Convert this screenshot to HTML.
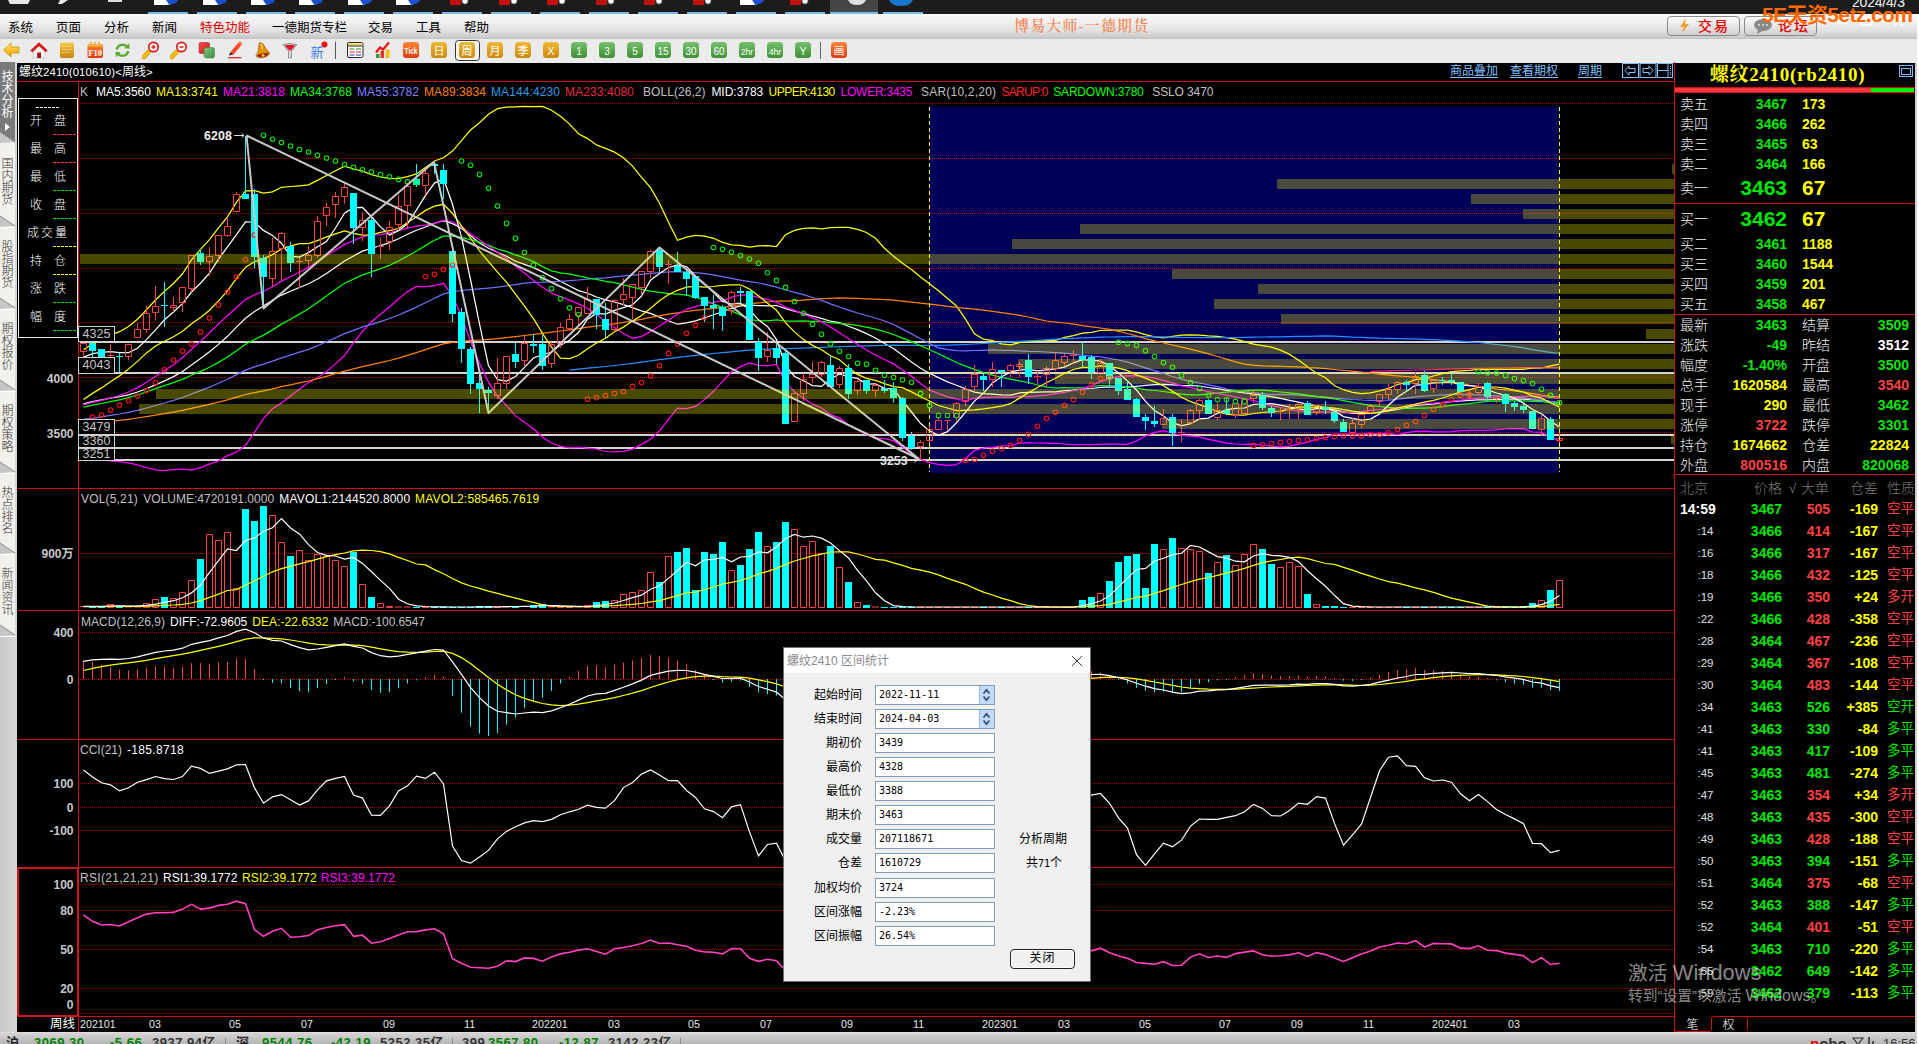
<!DOCTYPE html><html lang="zh"><head><meta charset="utf-8"><title>博易大师-一德期货</title><style>
*{margin:0;padding:0;box-sizing:border-box}
html,body{width:1919px;height:1044px;overflow:hidden;background:#000}
body{position:relative;font-family:"Liberation Sans","Noto Sans CJK SC",sans-serif;font-size:12px;color:#fff;line-height:1}
.a{position:absolute;white-space:nowrap}
#task{left:0;top:0;width:1919px;height:14px;background:#1c1c1c}
#menu{left:0;top:14px;width:1917px;height:25px;background:linear-gradient(#f8f8f8 0,#efefef 35%,#dedede 72%,#c4c4c4 100%)}
#menu span{position:absolute;top:7.5px;color:#000;font-size:12.5px}
#tool{left:0;top:38px;width:1917px;height:25px;background:#ebebeb;border-top:1px solid #c4c4c4}
#side{left:0;top:62px;width:17px;height:970px;background:linear-gradient(90deg,#c8c8c8 0,#d8d8d8 100%)}
#status{left:0;top:1032px;width:1917px;height:12px;background:linear-gradient(#d6d4d4,#b6b6b6);border-top:1px solid #e4dcdc;overflow:hidden}
.t{position:absolute;white-space:nowrap;font-size:12px;line-height:14px}
.ax{position:absolute;white-space:nowrap;font-size:12px;line-height:14px;color:#c8c8c8;font-weight:bold;text-align:right;width:60px}
.rp{position:absolute;white-space:nowrap;line-height:20px;height:20px}
.lab{font-size:14px;color:#f4f4f4;font-family:"Liberation Sans","Noto Sans CJK SC",sans-serif;font-weight:300}
.num{font-size:14px;font-weight:bold;text-align:right}
.g{color:#00e600}.y{color:#ffff00}.r{color:#ff4040}.w{color:#fff}
.dl{position:absolute;text-align:right;width:80px;left:-2px;font-size:12px;color:#000;line-height:14px}
.in{position:absolute;left:91px;width:120px;height:20px;background:#fff;border:1px solid #7f9db9;font-family:"DejaVu Sans Mono","Liberation Mono",monospace;font-size:10px;color:#000;line-height:17px;padding-left:3px}
</style></head><body>
<div id="task" class="a"><svg width="1919" height="14" style="position:absolute;left:0;top:0"><rect x="148" y="12" width="40" height="2" fill="#76b9ed"/><rect x="197" y="12" width="40" height="2" fill="#76b9ed"/><rect x="246" y="12" width="40" height="2" fill="#76b9ed"/><rect x="295" y="12" width="40" height="2" fill="#76b9ed"/><rect x="344" y="12" width="40" height="2" fill="#76b9ed"/><rect x="393" y="12" width="40" height="2" fill="#76b9ed"/><rect x="442" y="12" width="40" height="2" fill="#76b9ed"/><rect x="491" y="12" width="40" height="2" fill="#76b9ed"/><rect x="540" y="12" width="40" height="2" fill="#76b9ed"/><rect x="589" y="12" width="40" height="2" fill="#76b9ed"/><rect x="638" y="12" width="40" height="2" fill="#76b9ed"/><rect x="687" y="12" width="40" height="2" fill="#76b9ed"/><rect x="736" y="12" width="40" height="2" fill="#76b9ed"/><rect x="785" y="12" width="40" height="2" fill="#76b9ed"/><rect x="883" y="12" width="40" height="2" fill="#76b9ed"/><rect x="830" y="0" width="48" height="14" fill="#454545"/><rect x="830" y="12" width="48" height="2" fill="#76b9ed"/><path d="M154,0 h20 v2 q-2,3 -8,3 h-12 z" fill="#fff"/><path d="M166,0 h12 q-1,4 -9,4.5 z" fill="#1b4fd0"/><path d="M203,0 h20 v2 q-2,3 -8,3 h-12 z" fill="#fff"/><path d="M215,0 h12 q-1,4 -9,4.5 z" fill="#1b4fd0"/><path d="M251,0 h20 v2 q-2,3 -8,3 h-12 z" fill="#fff"/><path d="M263,0 h12 q-1,4 -9,4.5 z" fill="#1b4fd0"/><path d="M299,0 h20 v2 q-2,3 -8,3 h-12 z" fill="#fff"/><path d="M311,0 h12 q-1,4 -9,4.5 z" fill="#1b4fd0"/><path d="M348,0 h20 v2 q-2,3 -8,3 h-12 z" fill="#fff"/><path d="M360,0 h12 q-1,4 -9,4.5 z" fill="#1b4fd0"/><path d="M396,0 h20 v2 q-2,3 -8,3 h-12 z" fill="#fff"/><path d="M408,0 h12 q-1,4 -9,4.5 z" fill="#1b4fd0"/><path d="M740,0 h20 v2 q-2,3 -8,3 h-12 z" fill="#fff"/><path d="M752,0 h12 q-1,4 -9,4.5 z" fill="#1b4fd0"/><rect x="450" y="0" width="11" height="5" fill="#c01010"/><circle cx="465" cy="1" r="3.2" fill="#fff" stroke="#222" stroke-width="0.8"/><rect x="499" y="0" width="11" height="5" fill="#c01010"/><circle cx="514" cy="1" r="3.2" fill="#fff" stroke="#222" stroke-width="0.8"/><rect x="547" y="0" width="11" height="5" fill="#c01010"/><circle cx="562" cy="1" r="3.2" fill="#fff" stroke="#222" stroke-width="0.8"/><rect x="596" y="0" width="11" height="5" fill="#c01010"/><circle cx="611" cy="1" r="3.2" fill="#fff" stroke="#222" stroke-width="0.8"/><rect x="644" y="0" width="11" height="5" fill="#c01010"/><circle cx="659" cy="1" r="3.2" fill="#fff" stroke="#222" stroke-width="0.8"/><rect x="693" y="0" width="11" height="5" fill="#c01010"/><circle cx="708" cy="1" r="3.2" fill="#fff" stroke="#222" stroke-width="0.8"/><rect x="790" y="0" width="11" height="5" fill="#c01010"/><circle cx="805" cy="1" r="3.2" fill="#fff" stroke="#222" stroke-width="0.8"/><path d="M8,0 h22 l-2,4 h-18 z" fill="#e8e8e8"/><path d="M60,0 l8,0 l-6,4 l-4,0 z" fill="#e8e8e8"/><rect x="108" y="0" width="14" height="2" fill="#ddd"/><path d="M848,0 h18 q-2,5 -9,5 q-7,0 -9,-5z" fill="#e0e0e0"/><path d="M889,0 h24 q-3,6 -12,6 q-9,0 -12,-6z" fill="#1878d0"/></svg></div>
<div id="menu" class="a">
<span style="left:8px">系统</span>
<span style="left:56px">页面</span>
<span style="left:104px">分析</span>
<span style="left:152px">新闻</span>
<span style="left:200px;color:#e00000">特色功能</span>
<span style="left:272px">一德期货专栏</span>
<span style="left:368px">交易</span>
<span style="left:416px">工具</span>
<span style="left:464px">帮助</span>
<span style="left:1014px;top:5px;font-family:'Liberation Serif','Noto Serif CJK SC',serif;font-size:15px;font-weight:500;color:#f4804a;letter-spacing:1.15px">博易大师-一德期货</span>
<div class="a" style="left:1667px;top:2px;width:73px;height:20px;border:1px solid #8a8a8a;border-radius:4px;background:linear-gradient(#fdfdfd,#e2e2e2 60%,#cfcfcf)"></div>
<div class="a" style="left:1744px;top:2px;width:73px;height:20px;border:1px solid #8a8a8a;border-radius:4px;background:linear-gradient(#fdfdfd,#e2e2e2 60%,#cfcfcf)"></div>
<svg class="a" style="left:1678px;top:4px" width="14" height="17"><path d="M8,0 L2,9 H6 L3,16 L11,6 H7 Z" fill="#f0a030"/></svg>
<span style="left:1698px;top:5px;color:#e00000;font-size:14px;font-weight:500;letter-spacing:2px">交易</span>
<svg class="a" style="left:1754px;top:5px" width="20" height="15"><ellipse cx="9" cy="6" rx="9" ry="6" fill="#8a8a8a"/><path d="M4,10 L3,15 L10,11z" fill="#8a8a8a"/><circle cx="5" cy="6" r="1.1" fill="#ddd"/><circle cx="9" cy="6" r="1.1" fill="#ddd"/><circle cx="13" cy="6" r="1.1" fill="#ddd"/></svg>
<span style="left:1778px;top:5px;color:#e00000;font-size:14px;font-weight:500;letter-spacing:2px">论坛</span>
<svg class="a" style="left:1830px;top:0px" width="86" height="24"><g stroke="#fff" stroke-width="1.6" fill="none"><path d="M6,9 h12"/><rect x="32" y="3" width="10" height="8"/><path d="M64,3 l9,9 M73,3 l-9,9"/></g></svg>
</div>
<div class="a" style="left:1852px;top:-5px;font-size:14px;color:#f4f4f4;letter-spacing:-0.2px">2024/4/3</div>
<div class="a" style="left:1762px;top:3px;font-size:21px;font-weight:bold;color:#ff6a00;letter-spacing:-0.6px;line-height:24px">5E天资5etz.com</div>
<div id="tool" class="a"><svg width="900" height="23" style="position:absolute;left:0;top:0">
<defs><linearGradient id="gy" x1="0" y1="0" x2="0" y2="1"><stop offset="0" stop-color="#ffe860"/><stop offset="1" stop-color="#f0a000"/></linearGradient><linearGradient id="gn" x1="0" y1="0" x2="0" y2="1"><stop offset="0" stop-color="#f6c848"/><stop offset="1" stop-color="#c88410"/></linearGradient><linearGradient id="gf" x1="0" y1="0" x2="0" y2="1"><stop offset="0" stop-color="#ff8838"/><stop offset="1" stop-color="#e03810"/></linearGradient><linearGradient id="gr" x1="0" y1="0" x2="1" y2="1"><stop offset="0" stop-color="#ff5050"/><stop offset="1" stop-color="#c81010"/></linearGradient><linearGradient id="gg" x1="0" y1="0" x2="1" y2="1"><stop offset="0" stop-color="#80c880"/><stop offset="1" stop-color="#3c8c3c"/></linearGradient><linearGradient id="go" x1="0" y1="0" x2="0" y2="1"><stop offset="0" stop-color="#f0b838"/><stop offset="1" stop-color="#cc8808"/></linearGradient><linearGradient id="gq" x1="0" y1="0" x2="0" y2="1"><stop offset="0" stop-color="#78c070"/><stop offset="1" stop-color="#3c9034"/></linearGradient></defs><path d="M3.500,11 L11,4 V8 H19 V14 H11 V18 Z" fill="url(#gy)" stroke="#c88a00" stroke-width="0.7"/><path d="M33,12.500 L39,7 L45,12.500 V19 H33 Z" fill="#f2f2f2" stroke="#aaa" stroke-width="0.5"/><path d="M39,3.300 L47.700,11.500 L45.700,13.200 L39,7 L32.300,13.200 L30.300,11.500 Z" fill="#d81818"/><rect x="37.200" y="13.500" width="3.800" height="5.500" fill="#a81010"/><rect x="60" y="3.500" width="14" height="15.500" rx="2" fill="url(#gn)"/><path d="M62,7.500 h10 M62,10.500 h10 M62,13.500 h8" stroke="#f8e0a0" stroke-width="0.8" stroke-dasharray="1.500,0.700"/><rect x="87.500" y="5" width="15.500" height="14" rx="2" fill="url(#gf)"/><rect x="88" y="5" width="14.500" height="2.500" rx="1" fill="#f8b838"/><path d="M91,3 v3 M95,3 v3 M99,3 v3" stroke="#e89020" stroke-width="1.200"/><text x="95.200" y="16.800" font-size="8.500" font-weight="bold" text-anchor="middle" fill="#fff" font-family="Liberation Serif,serif">F10</text><g fill="none" stroke="#5aaa30" stroke-width="2.400"><path d="M116.800,10.500 A5.800,5.300 0 0 1 126.500,7.200"/><path d="M128.200,12 A5.800,5.300 0 0 1 118.500,15.300"/></g><path d="M124.300,9.300 L129.800,9.800 L128.800,4.300 Z M120.700,13.200 L115.200,12.700 L116.200,18.200 Z" fill="#5aaa30"/><path d="M144.0,18 l4.500,-5" stroke="#c89000" stroke-width="4.400" stroke-linecap="round"/><path d="M144.0,18 l4.500,-5" stroke="#f8c010" stroke-width="3.200" stroke-linecap="round"/><circle cx="153.5" cy="8" r="4.700" fill="#fff" stroke="#e01818" stroke-width="1.700"/><path d="M151.5,8 h4" stroke="#e01818" stroke-width="1.500"/><path d="M153.5,6 v4" stroke="#e01818" stroke-width="1.500"/><path d="M172.0,18 l4.500,-5" stroke="#c89000" stroke-width="4.400" stroke-linecap="round"/><path d="M172.0,18 l4.500,-5" stroke="#f8c010" stroke-width="3.200" stroke-linecap="round"/><circle cx="181.5" cy="8" r="4.700" fill="#fff" stroke="#e01818" stroke-width="1.700"/><path d="M179.5,8 h4" stroke="#e01818" stroke-width="1.500"/><rect x="199" y="3.500" width="10.500" height="11" rx="1.500" fill="url(#gr)" stroke="#a01010" stroke-width="0.500"/><rect x="204" y="8.500" width="10.500" height="10.500" rx="2" fill="url(#gg)" stroke="#3a7a3a" stroke-width="0.500"/><path d="M230.500,13 L238.500,3.500 L241.500,6 L233.500,15.500 Z" fill="#f84828"/><path d="M230.500,13 L233.500,15.500 L228.800,16.500 Z" fill="#303030"/><path d="M238.500,3.500 L239.800,2.300 L242.600,4.700 L241.500,6Z" fill="#ff7050"/><path d="M228,18.700 h13.500" stroke="#f02020" stroke-width="1.300"/><path d="M259.500,3.500 Q263,3.500 265,8 Q267,12 269.500,13.500 Q270,17 263,18.700 Q256.500,19.500 256,16.500 Q258,14 258.500,10 Q258.700,5 259.500,3.500 Z" fill="#e8920c" stroke="#9a4a04" stroke-width="0.600"/><path d="M257,16.300 Q262,13.500 268.500,14 Q268,17 263,18 Q258,18.700 257,16.300Z" fill="#8a2408"/><circle cx="263" cy="16.200" r="1.500" fill="#f8c030"/><path d="M260.500,5 Q262,6 262.500,10" stroke="#ffd870" stroke-width="1.200" fill="none"/><path d="M283,5.500 Q290,3.500 297,5.500 L291.500,12 V19 H288.500 V12 Z" fill="#dcdcdc" stroke="#707070" stroke-width="0.700"/><path d="M284.500,6.300 Q290,5 295.500,6.300 L290.800,11.500 H289.200 Z" fill="#e01830"/><text x="310.500" y="18" font-size="13" fill="#3a7ae8" font-family="Noto Sans CJK SC,sans-serif">新</text><circle cx="324.500" cy="5.600" r="3" fill="#f81010"/><path d="M335.500,2.500 v17.500" stroke="#585858" stroke-width="1"/><rect x="347.500" y="3.500" width="15.500" height="15" rx="1.500" fill="#fff" stroke="#282828" stroke-width="1"/><path d="M348,5.500 h14.500" stroke="#f0d040" stroke-width="2"/><path d="M348,7 h14.500" stroke="#282828" stroke-width="1"/><path d="M349.500,10 h5 M356,10 h5" stroke="#209020" stroke-width="1.200"/><path d="M349.500,13 h5 M356,13 h5" stroke="#e01818" stroke-width="1.200"/><path d="M349.500,16 h5 M356,16 h5" stroke="#1830a0" stroke-width="1.200"/><rect x="376" y="15" width="3.500" height="4" fill="#389838"/><rect x="380.500" y="12" width="3.500" height="7" fill="#e83030"/><rect x="385.500" y="10.500" width="4" height="8.500" fill="#f4c020"/><path d="M376,13.500 L380,8.500 L383,10.500 L389,3.500" stroke="#f01010" stroke-width="2.200" fill="none"/><rect x="403" y="3" width="16" height="16" rx="3" fill="url(#gf)"/><text x="411" y="15" font-size="9.500" font-weight="bold" text-anchor="middle" fill="#fff" font-family="Liberation Sans,sans-serif" textLength="13" lengthAdjust="spacingAndGlyphs">Tick</text><rect x="431" y="3" width="16" height="16" rx="3.500" fill="url(#go)"/><text x="439" y="15.5" font-size="11" text-anchor="middle" fill="#fff" font-family='Liberation Sans,Noto Sans CJK SC,sans-serif'>日</text><rect x="455.5" y="1.500" width="24" height="20" rx="3" fill="#f4f4f4" stroke="#333" stroke-width="1"/><rect x="459" y="3" width="16" height="16" rx="3.500" fill="url(#go)"/><text x="467" y="15.5" font-size="11" text-anchor="middle" fill="#fff" font-family='Liberation Sans,Noto Sans CJK SC,sans-serif'>周</text><rect x="487" y="3" width="16" height="16" rx="3.500" fill="url(#go)"/><text x="495" y="15.5" font-size="11" text-anchor="middle" fill="#fff" font-family='Liberation Sans,Noto Sans CJK SC,sans-serif'>月</text><rect x="515" y="3" width="16" height="16" rx="3.500" fill="url(#go)"/><text x="523" y="15.5" font-size="11" text-anchor="middle" fill="#fff" font-family='Liberation Sans,Noto Sans CJK SC,sans-serif'>季</text><rect x="543" y="3" width="16" height="16" rx="3.500" fill="url(#go)"/><text x="551" y="15.5" font-size="11" text-anchor="middle" fill="#fff" font-family='Liberation Sans,Noto Sans CJK SC,sans-serif'>X</text><rect x="571" y="3" width="16" height="16" rx="3.500" fill="url(#gq)"/><text x="579" y="15.5" font-size="10" text-anchor="middle" fill="#fff" font-family='Liberation Sans,Noto Sans CJK SC,sans-serif'>1</text><rect x="599" y="3" width="16" height="16" rx="3.500" fill="url(#gq)"/><text x="607" y="15.5" font-size="10" text-anchor="middle" fill="#fff" font-family='Liberation Sans,Noto Sans CJK SC,sans-serif'>3</text><rect x="627" y="3" width="16" height="16" rx="3.500" fill="url(#gq)"/><text x="635" y="15.5" font-size="10" text-anchor="middle" fill="#fff" font-family='Liberation Sans,Noto Sans CJK SC,sans-serif'>5</text><rect x="655" y="3" width="16" height="16" rx="3.500" fill="url(#gq)"/><text x="663" y="15.5" font-size="10" text-anchor="middle" fill="#fff" font-family='Liberation Sans,Noto Sans CJK SC,sans-serif'>15</text><rect x="683" y="3" width="16" height="16" rx="3.500" fill="url(#gq)"/><text x="691" y="15.5" font-size="10" text-anchor="middle" fill="#fff" font-family='Liberation Sans,Noto Sans CJK SC,sans-serif'>30</text><rect x="711" y="3" width="16" height="16" rx="3.500" fill="url(#gq)"/><text x="719" y="15.5" font-size="10" text-anchor="middle" fill="#fff" font-family='Liberation Sans,Noto Sans CJK SC,sans-serif'>60</text><rect x="739" y="3" width="16" height="16" rx="3.500" fill="url(#gq)"/><text x="747" y="15.5" font-size="8.6" text-anchor="middle" fill="#fff" font-family='Liberation Sans,Noto Sans CJK SC,sans-serif'>2hr</text><rect x="767" y="3" width="16" height="16" rx="3.500" fill="url(#gq)"/><text x="775" y="15.5" font-size="8.6" text-anchor="middle" fill="#fff" font-family='Liberation Sans,Noto Sans CJK SC,sans-serif'>4hr</text><rect x="795" y="3" width="16" height="16" rx="3.500" fill="url(#gq)"/><text x="803" y="15.5" font-size="10" text-anchor="middle" fill="#fff" font-family='Liberation Sans,Noto Sans CJK SC,sans-serif'>Y</text><path d="M820.5,3 v17" stroke="#666" stroke-width="1"/><rect x="831" y="3" width="16" height="16" rx="3.500" fill="url(#gf)"/><text x="839" y="15.5" font-size="11" text-anchor="middle" fill="#fff" font-family='Liberation Sans,Noto Sans CJK SC,sans-serif'>画</text>
</svg></div>
<div id="side" class="a"><svg width="17" height="970" style="position:absolute;left:0;top:0">
<rect x="0" y="0" width="15" height="573" fill="#f1f0ea"/><path d="M0,0 H15 V80 L0,70 Z" fill="#7a7a7a"/><path d="M0,70 L15,80 L0,81 Z" fill="#c6c6c6"/><path d="M0,70 L15,80" stroke="#8a8a8a" stroke-width="1" fill="none"/><path d="M0,154 L15,164 L0,165 Z" fill="#c6c6c6"/><path d="M0,154 L15,164" stroke="#8a8a8a" stroke-width="1" fill="none"/><path d="M0,165.5 H15" stroke="#fff" stroke-width="1" fill="none"/><path d="M0,236 L15,246 L0,247 Z" fill="#c6c6c6"/><path d="M0,236 L15,246" stroke="#8a8a8a" stroke-width="1" fill="none"/><path d="M0,247.5 H15" stroke="#fff" stroke-width="1" fill="none"/><path d="M0,318 L15,328 L0,329 Z" fill="#c6c6c6"/><path d="M0,318 L15,328" stroke="#8a8a8a" stroke-width="1" fill="none"/><path d="M0,329.5 H15" stroke="#fff" stroke-width="1" fill="none"/><path d="M0,400 L15,410 L0,411 Z" fill="#c6c6c6"/><path d="M0,400 L15,410" stroke="#8a8a8a" stroke-width="1" fill="none"/><path d="M0,411.5 H15" stroke="#fff" stroke-width="1" fill="none"/><path d="M0,481 L15,491 L0,492 Z" fill="#c6c6c6"/><path d="M0,481 L15,491" stroke="#8a8a8a" stroke-width="1" fill="none"/><path d="M0,492.5 H15" stroke="#fff" stroke-width="1" fill="none"/><path d="M0,563 L15,573 L0,574 Z" fill="#c6c6c6"/><path d="M0,563 L15,573" stroke="#8a8a8a" stroke-width="1" fill="none"/><path d="M0,574.5 H15" stroke="#fff" stroke-width="1" fill="none"/><text x="7.500" y="18.9" font-size="12" font-weight="400" text-anchor="middle" fill="#fff" font-family="Noto Sans CJK SC,sans-serif">技</text><text x="7.500" y="30.9" font-size="12" font-weight="400" text-anchor="middle" fill="#fff" font-family="Noto Sans CJK SC,sans-serif">术</text><text x="7.500" y="42.9" font-size="12" font-weight="400" text-anchor="middle" fill="#fff" font-family="Noto Sans CJK SC,sans-serif">分</text><text x="7.500" y="54.9" font-size="12" font-weight="400" text-anchor="middle" fill="#fff" font-family="Noto Sans CJK SC,sans-serif">析</text><path d="M5,61 l5,4 l-5,4z" fill="#fff"/><text x="7.500" y="105.7" font-size="12" font-weight="300" text-anchor="middle" fill="#333" font-family="Noto Sans CJK SC,sans-serif">国</text><text x="7.500" y="117.7" font-size="12" font-weight="300" text-anchor="middle" fill="#333" font-family="Noto Sans CJK SC,sans-serif">内</text><text x="7.500" y="129.7" font-size="12" font-weight="300" text-anchor="middle" fill="#333" font-family="Noto Sans CJK SC,sans-serif">期</text><text x="7.500" y="141.7" font-size="12" font-weight="300" text-anchor="middle" fill="#333" font-family="Noto Sans CJK SC,sans-serif">货</text><text x="7.500" y="188.7" font-size="12" font-weight="300" text-anchor="middle" fill="#333" font-family="Noto Sans CJK SC,sans-serif">股</text><text x="7.500" y="200.7" font-size="12" font-weight="300" text-anchor="middle" fill="#333" font-family="Noto Sans CJK SC,sans-serif">指</text><text x="7.500" y="212.7" font-size="12" font-weight="300" text-anchor="middle" fill="#333" font-family="Noto Sans CJK SC,sans-serif">期</text><text x="7.500" y="224.7" font-size="12" font-weight="300" text-anchor="middle" fill="#333" font-family="Noto Sans CJK SC,sans-serif">货</text><text x="7.500" y="270.7" font-size="12" font-weight="300" text-anchor="middle" fill="#333" font-family="Noto Sans CJK SC,sans-serif">期</text><text x="7.500" y="282.7" font-size="12" font-weight="300" text-anchor="middle" fill="#333" font-family="Noto Sans CJK SC,sans-serif">权</text><text x="7.500" y="294.7" font-size="12" font-weight="300" text-anchor="middle" fill="#333" font-family="Noto Sans CJK SC,sans-serif">报</text><text x="7.500" y="306.7" font-size="12" font-weight="300" text-anchor="middle" fill="#333" font-family="Noto Sans CJK SC,sans-serif">价</text><text x="7.500" y="352.7" font-size="12" font-weight="300" text-anchor="middle" fill="#333" font-family="Noto Sans CJK SC,sans-serif">期</text><text x="7.500" y="364.7" font-size="12" font-weight="300" text-anchor="middle" fill="#333" font-family="Noto Sans CJK SC,sans-serif">权</text><text x="7.500" y="376.7" font-size="12" font-weight="300" text-anchor="middle" fill="#333" font-family="Noto Sans CJK SC,sans-serif">策</text><text x="7.500" y="388.7" font-size="12" font-weight="300" text-anchor="middle" fill="#333" font-family="Noto Sans CJK SC,sans-serif">略</text><text x="7.500" y="434.7" font-size="12" font-weight="300" text-anchor="middle" fill="#333" font-family="Noto Sans CJK SC,sans-serif">热</text><text x="7.500" y="446.7" font-size="12" font-weight="300" text-anchor="middle" fill="#333" font-family="Noto Sans CJK SC,sans-serif">点</text><text x="7.500" y="458.7" font-size="12" font-weight="300" text-anchor="middle" fill="#333" font-family="Noto Sans CJK SC,sans-serif">排</text><text x="7.500" y="470.7" font-size="12" font-weight="300" text-anchor="middle" fill="#333" font-family="Noto Sans CJK SC,sans-serif">名</text><text x="7.500" y="515.7" font-size="12" font-weight="300" text-anchor="middle" fill="#333" font-family="Noto Sans CJK SC,sans-serif">新</text><text x="7.500" y="527.7" font-size="12" font-weight="300" text-anchor="middle" fill="#333" font-family="Noto Sans CJK SC,sans-serif">闻</text><text x="7.500" y="539.7" font-size="12" font-weight="300" text-anchor="middle" fill="#333" font-family="Noto Sans CJK SC,sans-serif">资</text><text x="7.500" y="551.7" font-size="12" font-weight="300" text-anchor="middle" fill="#333" font-family="Noto Sans CJK SC,sans-serif">讯</text>
</svg></div>
<svg class="a" style="left:0;top:0" width="1919" height="1044" shape-rendering="auto">
<rect x="930" y="107" width="629" height="366" fill="#000058"/>
<path d="M80,103.5 H1674 M80,158.5 H1674 M80,213.5 H1674 M80,268.5 H1674 M80,322.5 H1674 M80,377.5 H1674 M80,432.5 H1674 M80,553.5 H1674 M80,632.5 H1674 M80,679.5 H1674 M80,783.5 H1674 M80,807.5 H1674 M80,830.5 H1674 M80,884.5 H1674 M80,910.5 H1674 M80,949.5 H1674 M80,988.5 H1674 M80,1013.5 H1674" stroke="#b80000" stroke-width="1" stroke-dasharray="1,1" fill="none"/>
<rect x="80" y="341" width="1594" height="2" fill="#d4d4d4"/>
<rect x="930" y="341" width="629" height="2" fill="#d8d8a8"/>
<rect x="80" y="372" width="1594" height="2" fill="#d4d4d4"/>
<rect x="930" y="372" width="629" height="2" fill="#d8d8a8"/>
<rect x="80" y="434" width="1594" height="2" fill="#d4d4d4"/>
<rect x="930" y="434" width="629" height="2" fill="#d8d8a8"/>
<rect x="80" y="447" width="1594" height="2" fill="#d4d4d4"/>
<rect x="930" y="447" width="629" height="2" fill="#d8d8a8"/>
<rect x="80" y="459" width="1594" height="2" fill="#d4d4d4"/>
<rect x="930" y="459" width="629" height="2" fill="#d8d8a8"/>
<path d="M83.5,349.8 L92.5,343.9 L101.5,339.4 L110.5,335.2 L119.5,331.7 L128.5,326.6 L137.5,319.3 L146.5,309.8 L155.5,300.0 L164.5,291.3 L173.5,283.5 L182.5,273.8 L191.5,259.8 L200.5,249.4 L209.5,239.6 L218.5,227.8 L227.5,217.0 L236.5,202.1 L245.5,190.9 L254.5,190.6 L263.5,193.2 L272.5,191.9 L281.5,187.3 L290.5,186.5 L299.5,185.8 L308.5,184.9 L317.5,180.4 L326.5,175.5 L335.5,170.8 L344.5,166.2 L353.5,169.0 L362.5,171.0 L371.5,174.7 L380.5,177.0 L389.5,178.3 L398.5,178.5 L407.5,176.7 L416.5,173.9 L425.5,167.4 L434.5,161.0 L443.5,157.8 L452.5,151.1 L461.5,140.7 L470.5,130.0 L479.5,122.7 L488.5,114.3 L497.5,108.6 L506.5,107.1 L515.5,106.8 L524.5,106.5 L533.5,106.6 L542.5,106.5 L551.5,110.2 L560.5,116.2 L569.5,124.1 L578.5,133.7 L587.5,138.6 L596.5,144.9 L605.5,148.4 L614.5,152.1 L623.5,157.8 L632.5,166.1 L641.5,177.4 L650.5,187.6 L659.5,203.2 L668.5,222.3 L677.5,240.3 L686.5,237.2 L695.5,235.4 L704.5,236.2 L713.5,238.3 L722.5,242.3 L731.5,244.9 L740.5,245.3 L749.5,247.2 L758.5,245.9 L767.5,245.6 L776.5,246.5 L785.5,234.7 L794.5,230.4 L803.5,228.4 L812.5,227.8 L821.5,228.8 L830.5,227.6 L839.5,227.3 L848.5,227.4 L857.5,229.4 L866.5,232.5 L875.5,238.3 L884.5,248.2 L893.5,256.2 L902.5,263.2 L911.5,269.5 L920.5,277.1 L929.5,283.8 L938.5,290.8 L947.5,298.4 L956.5,305.9 L965.5,319.2 L974.5,333.9 L983.5,339.2 L992.5,340.7 L1001.5,343.9 L1010.5,344.9 L1019.5,342.6 L1028.5,341.6 L1037.5,341.3 L1046.5,340.7 L1055.5,340.4 L1064.5,337.3 L1073.5,335.7 L1082.5,333.1 L1091.5,332.4 L1100.5,330.5 L1109.5,330.2 L1118.5,330.2 L1127.5,330.2 L1136.5,331.8 L1145.5,334.7 L1154.5,336.8 L1163.5,337.8 L1172.5,336.4 L1181.5,335.2 L1190.5,335.0 L1199.5,335.1 L1208.5,335.8 L1217.5,336.3 L1226.5,337.7 L1235.5,339.2 L1244.5,341.6 L1253.5,344.1 L1262.5,345.6 L1271.5,347.2 L1280.5,350.1 L1289.5,354.4 L1298.5,360.1 L1307.5,366.8 L1316.5,373.3 L1325.5,377.8 L1334.5,385.7 L1343.5,389.7 L1352.5,392.3 L1361.5,393.5 L1370.5,392.9 L1379.5,390.8 L1388.5,388.3 L1397.5,384.5 L1406.5,382.8 L1415.5,379.7 L1424.5,378.4 L1433.5,376.0 L1442.5,373.6 L1451.5,371.6 L1460.5,370.9 L1469.5,370.4 L1478.5,369.4 L1487.5,369.5 L1496.5,369.2 L1505.5,369.3 L1514.5,369.4 L1523.5,369.3 L1532.5,368.1 L1541.5,368.0 L1550.5,365.8 L1559.5,364.2" stroke="#ffff00" fill="none" stroke-width="1.25"/>
<path d="M83.5,457.9 L92.5,459.5 L101.5,460.2 L110.5,461.0 L119.5,461.6 L128.5,462.9 L137.5,464.8 L146.5,467.7 L155.5,469.8 L164.5,470.6 L173.5,469.7 L182.5,469.1 L191.5,470.2 L200.5,467.7 L209.5,464.1 L218.5,461.0 L227.5,455.6 L236.5,452.2 L245.5,445.4 L254.5,432.5 L263.5,418.5 L272.5,408.7 L281.5,402.9 L290.5,396.0 L299.5,389.1 L308.5,382.6 L317.5,377.8 L326.5,371.6 L335.5,363.9 L344.5,355.5 L353.5,342.8 L362.5,331.3 L371.5,321.8 L380.5,314.2 L389.5,306.9 L398.5,299.0 L407.5,291.6 L416.5,286.5 L425.5,286.7 L434.5,285.7 L443.5,283.3 L452.5,296.1 L461.5,316.0 L470.5,341.3 L479.5,363.3 L488.5,382.1 L497.5,396.0 L506.5,405.6 L515.5,415.9 L524.5,422.2 L533.5,428.7 L542.5,437.3 L551.5,443.0 L560.5,446.3 L569.5,447.8 L578.5,447.5 L587.5,448.1 L596.5,449.0 L605.5,451.5 L614.5,451.9 L623.5,451.4 L632.5,449.1 L641.5,444.4 L650.5,439.2 L659.5,430.9 L668.5,419.3 L677.5,408.1 L686.5,408.6 L695.5,406.4 L704.5,399.6 L713.5,391.3 L722.5,381.3 L731.5,371.7 L740.5,366.6 L749.5,362.9 L758.5,365.4 L767.5,365.9 L776.5,364.4 L785.5,382.4 L794.5,391.8 L803.5,398.3 L812.5,404.1 L821.5,408.0 L830.5,414.7 L839.5,417.9 L848.5,425.0 L857.5,429.7 L866.5,434.8 L875.5,437.8 L884.5,438.7 L893.5,440.7 L902.5,447.1 L911.5,454.3 L920.5,459.2 L929.5,462.6 L938.5,464.4 L947.5,465.3 L956.5,464.6 L965.5,458.7 L974.5,450.3 L983.5,448.0 L992.5,447.4 L1001.5,446.0 L1010.5,445.5 L1019.5,443.2 L1028.5,442.9 L1037.5,443.0 L1046.5,443.1 L1055.5,443.3 L1064.5,444.0 L1073.5,444.6 L1082.5,444.5 L1091.5,444.5 L1100.5,444.3 L1109.5,444.1 L1118.5,444.1 L1127.5,444.3 L1136.5,441.0 L1145.5,436.0 L1154.5,432.6 L1163.5,430.7 L1172.5,433.1 L1181.5,435.4 L1190.5,436.1 L1199.5,436.9 L1208.5,439.3 L1217.5,441.1 L1226.5,443.1 L1235.5,444.0 L1244.5,444.3 L1253.5,444.1 L1262.5,445.0 L1271.5,446.2 L1280.5,446.8 L1289.5,446.2 L1298.5,444.2 L1307.5,442.1 L1316.5,439.1 L1325.5,437.5 L1334.5,434.1 L1343.5,434.1 L1352.5,434.1 L1361.5,433.9 L1370.5,433.6 L1379.5,433.7 L1388.5,433.5 L1397.5,434.6 L1406.5,432.6 L1415.5,431.3 L1424.5,431.1 L1433.5,431.9 L1442.5,431.8 L1451.5,431.7 L1460.5,430.6 L1469.5,430.3 L1478.5,430.3 L1487.5,430.3 L1496.5,429.8 L1505.5,429.0 L1514.5,428.7 L1523.5,428.8 L1532.5,432.0 L1541.5,432.4 L1550.5,437.3 L1559.5,440.9" stroke="#ff00ff" fill="none" stroke-width="1.25"/>
<path d="M83.5,403.9 L92.5,401.7 L101.5,399.8 L110.5,398.1 L119.5,396.6 L128.5,394.8 L137.5,392.0 L146.5,388.7 L155.5,384.9 L164.5,380.9 L173.5,376.6 L182.5,371.5 L191.5,365.0 L200.5,358.5 L209.5,351.8 L218.5,344.4 L227.5,336.3 L236.5,327.1 L245.5,318.2 L254.5,311.5 L263.5,305.9 L272.5,300.3 L281.5,295.1 L290.5,291.2 L299.5,287.5 L308.5,283.7 L317.5,279.1 L326.5,273.5 L335.5,267.3 L344.5,260.9 L353.5,255.9 L362.5,251.1 L371.5,248.2 L380.5,245.6 L389.5,242.6 L398.5,238.7 L407.5,234.2 L416.5,230.2 L425.5,227.0 L434.5,223.3 L443.5,220.6 L452.5,223.6 L461.5,228.4 L470.5,235.7 L479.5,243.0 L488.5,248.2 L497.5,252.3 L506.5,256.3 L515.5,261.3 L524.5,264.4 L533.5,267.6 L542.5,271.9 L551.5,276.6 L560.5,281.2 L569.5,286.0 L578.5,290.6 L587.5,293.3 L596.5,297.0 L605.5,299.9 L614.5,302.0 L623.5,304.6 L632.5,307.6 L641.5,310.9 L650.5,313.4 L659.5,317.1 L668.5,320.8 L677.5,324.2 L686.5,322.9 L695.5,320.9 L704.5,317.9 L713.5,314.8 L722.5,311.8 L731.5,308.3 L740.5,305.9 L749.5,305.1 L758.5,305.6 L767.5,305.8 L776.5,305.5 L785.5,308.6 L794.5,311.1 L803.5,313.4 L812.5,316.0 L821.5,318.4 L830.5,321.2 L839.5,322.6 L848.5,326.2 L857.5,329.6 L866.5,333.6 L875.5,338.0 L884.5,343.4 L893.5,348.5 L902.5,355.2 L911.5,361.9 L920.5,368.2 L929.5,373.2 L938.5,377.6 L947.5,381.9 L956.5,385.2 L965.5,388.9 L974.5,392.1 L983.5,393.6 L992.5,394.1 L1001.5,394.9 L1010.5,395.2 L1019.5,392.9 L1028.5,392.3 L1037.5,392.1 L1046.5,391.9 L1055.5,391.8 L1064.5,390.6 L1073.5,390.1 L1082.5,388.8 L1091.5,388.5 L1100.5,387.4 L1109.5,387.2 L1118.5,387.2 L1127.5,387.2 L1136.5,386.4 L1145.5,385.4 L1154.5,384.7 L1163.5,384.3 L1172.5,384.8 L1181.5,385.3 L1190.5,385.6 L1199.5,386.0 L1208.5,387.5 L1217.5,388.7 L1226.5,390.4 L1235.5,391.6 L1244.5,392.9 L1253.5,394.1 L1262.5,395.3 L1271.5,396.7 L1280.5,398.4 L1289.5,400.3 L1298.5,402.1 L1307.5,404.4 L1316.5,406.2 L1325.5,407.7 L1334.5,409.9 L1343.5,411.9 L1352.5,413.2 L1361.5,413.7 L1370.5,413.3 L1379.5,412.3 L1388.5,410.9 L1397.5,409.5 L1406.5,407.7 L1415.5,405.5 L1424.5,404.7 L1433.5,404.0 L1442.5,402.7 L1451.5,401.6 L1460.5,400.8 L1469.5,400.4 L1478.5,399.9 L1487.5,399.9 L1496.5,399.5 L1505.5,399.2 L1514.5,399.0 L1523.5,399.1 L1532.5,400.0 L1541.5,400.2 L1550.5,401.5 L1559.5,402.6" stroke="#ffffff" fill="none" stroke-width="1.2"/>
<path d="M1370.5,371.3 L1379.5,371.1 L1388.5,370.8 L1397.5,370.6 L1406.5,370.3 L1415.5,370.0 L1424.5,369.8 L1433.5,369.6 L1442.5,369.3 L1451.5,369.1 L1460.5,368.9 L1469.5,368.7 L1478.5,368.4 L1487.5,368.3 L1496.5,368.1 L1505.5,368.0 L1514.5,367.8 L1523.5,367.7 L1532.5,367.7 L1541.5,367.7 L1550.5,367.7 L1559.5,367.8" stroke="#ff2060" fill="none" stroke-width="1.25"/>
<path d="M569.5,370.2 L578.5,369.2 L587.5,368.2 L596.5,367.3 L605.5,366.5 L614.5,365.5 L623.5,364.5 L632.5,363.4 L641.5,362.2 L650.5,360.9 L659.5,359.7 L668.5,358.6 L677.5,357.4 L686.5,356.3 L695.5,355.3 L704.5,354.4 L713.5,353.5 L722.5,352.7 L731.5,351.8 L740.5,350.8 L749.5,350.2 L758.5,349.7 L767.5,349.1 L776.5,348.6 L785.5,348.6 L794.5,348.4 L803.5,348.1 L812.5,347.7 L821.5,347.3 L830.5,347.0 L839.5,346.6 L848.5,346.4 L857.5,346.1 L866.5,345.9 L875.5,345.6 L884.5,345.4 L893.5,345.2 L902.5,345.3 L911.5,345.4 L920.5,345.5 L929.5,345.4 L938.5,345.3 L947.5,345.2 L956.5,344.9 L965.5,344.5 L974.5,344.0 L983.5,343.5 L992.5,343.0 L1001.5,342.4 L1010.5,341.9 L1019.5,341.3 L1028.5,340.8 L1037.5,340.3 L1046.5,339.8 L1055.5,339.2 L1064.5,338.7 L1073.5,338.3 L1082.5,337.9 L1091.5,337.6 L1100.5,337.2 L1109.5,337.0 L1118.5,336.8 L1127.5,336.6 L1136.5,336.6 L1145.5,336.7 L1154.5,336.8 L1163.5,336.9 L1172.5,337.1 L1181.5,337.4 L1190.5,337.5 L1199.5,337.5 L1208.5,337.6 L1217.5,337.6 L1226.5,337.6 L1235.5,337.5 L1244.5,337.4 L1253.5,337.2 L1262.5,337.0 L1271.5,336.9 L1280.5,336.8 L1289.5,336.6 L1298.5,336.4 L1307.5,336.3 L1316.5,336.1 L1325.5,336.0 L1334.5,336.2 L1343.5,336.6 L1352.5,337.1 L1361.5,337.4 L1370.5,337.8 L1379.5,338.2 L1388.5,338.4 L1397.5,338.6 L1406.5,338.8 L1415.5,338.9 L1424.5,339.3 L1433.5,339.6 L1442.5,340.1 L1451.5,340.6 L1460.5,341.2 L1469.5,341.8 L1478.5,342.5 L1487.5,343.5 L1496.5,344.4 L1505.5,345.5 L1514.5,346.7 L1523.5,347.9 L1532.5,349.6 L1541.5,351.1 L1550.5,352.4 L1559.5,353.5" stroke="#2090ff" fill="none" stroke-width="1.25"/>
<path d="M83.5,424.4 L92.5,423.3 L101.5,422.3 L110.5,421.3 L119.5,420.4 L128.5,419.3 L137.5,418.0 L146.5,416.6 L155.5,415.1 L164.5,413.6 L173.5,412.1 L182.5,410.4 L191.5,408.3 L200.5,406.4 L209.5,404.3 L218.5,402.1 L227.5,399.8 L236.5,397.2 L245.5,394.5 L254.5,392.6 L263.5,390.9 L272.5,388.9 L281.5,386.6 L290.5,384.8 L299.5,382.9 L308.5,381.0 L317.5,378.7 L326.5,376.3 L335.5,373.7 L344.5,371.1 L353.5,368.9 L362.5,366.6 L371.5,364.7 L380.5,362.7 L389.5,360.5 L398.5,358.1 L407.5,355.4 L416.5,352.6 L425.5,349.7 L434.5,346.6 L443.5,343.8 L452.5,342.3 L461.5,341.3 L470.5,340.6 L479.5,340.0 L488.5,339.3 L497.5,338.6 L506.5,337.6 L515.5,336.6 L524.5,335.5 L533.5,334.3 L542.5,333.3 L551.5,332.2 L560.5,331.0 L569.5,329.8 L578.5,328.6 L587.5,327.2 L596.5,326.1 L605.5,325.1 L614.5,323.8 L623.5,322.4 L632.5,320.9 L641.5,319.3 L650.5,317.4 L659.5,315.8 L668.5,314.2 L677.5,312.8 L686.5,311.5 L695.5,310.4 L704.5,309.3 L713.5,308.3 L722.5,307.3 L731.5,306.0 L740.5,304.6 L749.5,303.7 L758.5,302.9 L767.5,302.0 L776.5,301.2 L785.5,301.2 L794.5,300.7 L803.5,300.1 L812.5,299.4 L821.5,298.7 L830.5,298.3 L839.5,298.0 L848.5,298.2 L857.5,298.4 L866.5,298.8 L875.5,299.2 L884.5,299.7 L893.5,300.2 L902.5,301.2 L911.5,302.2 L920.5,303.1 L929.5,304.1 L938.5,305.1 L947.5,306.3 L956.5,307.4 L965.5,308.3 L974.5,309.1 L983.5,310.2 L992.5,311.4 L1001.5,312.7 L1010.5,313.9 L1019.5,315.3 L1028.5,317.0 L1037.5,319.1 L1046.5,321.0 L1055.5,322.1 L1064.5,323.0 L1073.5,324.2 L1082.5,325.6 L1091.5,326.8 L1100.5,328.0 L1109.5,329.4 L1118.5,331.3 L1127.5,333.5 L1136.5,335.9 L1145.5,338.6 L1154.5,340.8 L1163.5,343.0 L1172.5,345.0 L1181.5,347.1 L1190.5,349.2 L1199.5,351.4 L1208.5,353.9 L1217.5,356.5 L1226.5,359.2 L1235.5,361.8 L1244.5,364.2 L1253.5,365.2 L1262.5,365.8 L1271.5,366.1 L1280.5,366.4 L1289.5,366.6 L1298.5,366.8 L1307.5,367.5 L1316.5,367.9 L1325.5,368.7 L1334.5,369.5 L1343.5,370.3 L1352.5,371.2 L1361.5,372.2 L1370.5,373.1 L1379.5,374.1 L1388.5,375.1 L1397.5,375.9 L1406.5,376.5 L1415.5,377.3 L1424.5,378.4 L1433.5,379.5 L1442.5,380.7 L1451.5,382.2 L1460.5,383.6 L1469.5,385.1 L1478.5,386.3 L1487.5,387.7 L1496.5,388.8 L1505.5,389.9 L1514.5,391.0 L1523.5,392.1 L1532.5,393.6 L1541.5,395.0 L1550.5,396.1 L1559.5,397.0" stroke="#ff8000" fill="none" stroke-width="1.25"/>
<path d="M83.5,419.4 L92.5,418.1 L101.5,416.8 L110.5,415.4 L119.5,414.0 L128.5,412.3 L137.5,410.4 L146.5,408.0 L155.5,405.5 L164.5,403.0 L173.5,400.4 L182.5,397.5 L191.5,394.0 L200.5,390.6 L209.5,387.2 L218.5,383.3 L227.5,379.2 L236.5,374.6 L245.5,370.1 L254.5,366.9 L263.5,364.2 L272.5,361.2 L281.5,357.8 L290.5,355.1 L299.5,352.2 L308.5,349.3 L317.5,345.7 L326.5,341.8 L335.5,337.8 L344.5,333.6 L353.5,330.3 L362.5,326.9 L371.5,324.3 L380.5,321.6 L389.5,318.5 L398.5,315.0 L407.5,311.1 L416.5,307.1 L425.5,302.8 L434.5,298.2 L443.5,293.9 L452.5,291.9 L461.5,290.5 L470.5,289.6 L479.5,288.9 L488.5,288.1 L497.5,287.2 L506.5,285.8 L515.5,284.6 L524.5,283.2 L533.5,282.3 L542.5,282.2 L551.5,281.8 L560.5,281.3 L569.5,280.7 L578.5,280.0 L587.5,279.1 L596.5,278.3 L605.5,277.9 L614.5,276.8 L623.5,275.9 L632.5,275.1 L641.5,274.3 L650.5,273.3 L659.5,272.6 L668.5,271.9 L677.5,271.6 L686.5,272.0 L695.5,272.7 L704.5,273.6 L713.5,274.9 L722.5,276.6 L731.5,278.3 L740.5,280.1 L749.5,281.6 L758.5,283.0 L767.5,284.8 L776.5,287.1 L785.5,290.0 L794.5,292.4 L803.5,294.7 L812.5,297.5 L821.5,300.3 L830.5,303.8 L839.5,307.0 L848.5,310.1 L857.5,313.0 L866.5,315.5 L875.5,318.0 L884.5,321.0 L893.5,324.5 L902.5,329.1 L911.5,333.9 L920.5,338.7 L929.5,343.5 L938.5,347.8 L947.5,349.7 L956.5,350.7 L965.5,350.8 L974.5,350.5 L983.5,350.3 L992.5,350.0 L1001.5,350.3 L1010.5,350.4 L1019.5,350.8 L1028.5,351.3 L1037.5,351.5 L1046.5,352.0 L1055.5,352.6 L1064.5,353.2 L1073.5,354.1 L1082.5,355.2 L1091.5,356.2 L1100.5,356.8 L1109.5,358.3 L1118.5,360.0 L1127.5,362.1 L1136.5,364.8 L1145.5,367.9 L1154.5,370.7 L1163.5,373.5 L1172.5,376.5 L1181.5,379.2 L1190.5,381.3 L1199.5,383.0 L1208.5,384.9 L1217.5,386.6 L1226.5,388.9 L1235.5,390.9 L1244.5,391.9 L1253.5,392.6 L1262.5,393.7 L1271.5,394.7 L1280.5,394.4 L1289.5,394.7 L1298.5,395.2 L1307.5,395.9 L1316.5,396.7 L1325.5,397.1 L1334.5,398.1 L1343.5,398.8 L1352.5,399.5 L1361.5,400.0 L1370.5,400.3 L1379.5,400.4 L1388.5,400.2 L1397.5,399.2 L1406.5,398.1 L1415.5,396.9 L1424.5,396.2 L1433.5,395.5 L1442.5,394.8 L1451.5,394.4 L1460.5,394.4 L1469.5,394.8 L1478.5,394.9 L1487.5,395.4 L1496.5,395.9 L1505.5,396.6 L1514.5,397.3 L1523.5,397.9 L1532.5,398.9 L1541.5,399.8 L1550.5,401.3 L1559.5,402.8" stroke="#7070ff" fill="none" stroke-width="1.25"/>
<path d="M83.5,407.2 L92.5,405.2 L101.5,403.5 L110.5,401.6 L119.5,399.9 L128.5,397.6 L137.5,395.0 L146.5,391.9 L155.5,388.6 L164.5,385.6 L173.5,382.7 L182.5,379.3 L191.5,375.3 L200.5,371.4 L209.5,367.2 L218.5,362.4 L227.5,357.0 L236.5,350.7 L245.5,344.3 L254.5,339.5 L263.5,335.1 L272.5,329.9 L281.5,324.1 L290.5,319.2 L299.5,314.1 L308.5,308.8 L317.5,302.6 L326.5,296.1 L335.5,289.4 L344.5,283.3 L353.5,279.1 L362.5,274.9 L371.5,271.8 L380.5,268.7 L389.5,265.3 L398.5,261.0 L407.5,256.0 L416.5,251.0 L425.5,245.6 L434.5,240.3 L443.5,236.1 L452.5,236.1 L461.5,237.3 L470.5,239.6 L479.5,242.1 L488.5,245.2 L497.5,249.0 L506.5,251.7 L515.5,254.8 L524.5,258.0 L533.5,261.6 L542.5,266.6 L551.5,270.9 L560.5,272.9 L569.5,274.2 L578.5,275.8 L587.5,277.8 L596.5,279.3 L605.5,281.3 L614.5,282.7 L623.5,284.8 L632.5,287.1 L641.5,289.3 L650.5,291.2 L659.5,292.3 L668.5,293.6 L677.5,294.2 L686.5,295.1 L695.5,297.2 L704.5,300.2 L713.5,303.8 L722.5,307.6 L731.5,311.1 L740.5,314.9 L749.5,319.5 L758.5,320.7 L767.5,320.8 L776.5,320.0 L785.5,321.0 L794.5,321.0 L803.5,320.9 L812.5,321.4 L821.5,321.4 L830.5,322.7 L839.5,323.4 L848.5,324.2 L857.5,325.3 L866.5,327.2 L875.5,329.1 L884.5,331.6 L893.5,334.5 L902.5,338.1 L911.5,341.6 L920.5,345.7 L929.5,349.7 L938.5,353.7 L947.5,358.1 L956.5,362.5 L965.5,366.1 L974.5,369.4 L983.5,372.5 L992.5,375.2 L1001.5,377.4 L1010.5,379.1 L1019.5,380.8 L1028.5,382.5 L1037.5,385.0 L1046.5,387.2 L1055.5,387.8 L1064.5,387.7 L1073.5,387.9 L1082.5,387.9 L1091.5,386.4 L1100.5,385.5 L1109.5,385.5 L1118.5,386.0 L1127.5,387.1 L1136.5,388.0 L1145.5,389.6 L1154.5,390.5 L1163.5,391.5 L1172.5,392.8 L1181.5,394.2 L1190.5,394.8 L1199.5,394.8 L1208.5,394.1 L1217.5,393.0 L1226.5,392.2 L1235.5,391.4 L1244.5,390.8 L1253.5,390.1 L1262.5,390.2 L1271.5,390.9 L1280.5,392.0 L1289.5,392.9 L1298.5,393.9 L1307.5,395.2 L1316.5,396.3 L1325.5,397.7 L1334.5,399.0 L1343.5,400.6 L1352.5,402.3 L1361.5,403.9 L1370.5,405.3 L1379.5,406.5 L1388.5,407.4 L1397.5,407.7 L1406.5,408.3 L1415.5,408.2 L1424.5,408.2 L1433.5,407.6 L1442.5,406.6 L1451.5,405.4 L1460.5,404.5 L1469.5,403.7 L1478.5,402.3 L1487.5,401.3 L1496.5,400.9 L1505.5,401.0 L1514.5,400.8 L1523.5,400.8 L1532.5,401.3 L1541.5,401.7 L1550.5,402.9 L1559.5,404.1" stroke="#00ff00" fill="none" stroke-width="1.25"/>
<path d="M83.5,404.8 L92.5,402.4 L101.5,400.4 L110.5,398.0 L119.5,395.5 L128.5,392.0 L137.5,387.6 L146.5,382.3 L155.5,376.5 L164.5,370.6 L173.5,364.7 L182.5,357.6 L191.5,349.2 L200.5,341.1 L209.5,332.8 L218.5,323.9 L227.5,315.7 L236.5,307.5 L245.5,299.6 L254.5,294.7 L263.5,291.2 L272.5,286.8 L281.5,281.1 L290.5,276.7 L299.5,272.2 L308.5,267.4 L317.5,261.5 L326.5,255.7 L335.5,250.1 L344.5,244.4 L353.5,240.7 L362.5,236.7 L371.5,235.1 L380.5,234.6 L389.5,232.9 L398.5,230.5 L407.5,228.2 L416.5,226.2 L425.5,225.2 L434.5,223.7 L443.5,220.2 L452.5,222.0 L461.5,226.7 L470.5,233.9 L479.5,239.8 L488.5,246.1 L497.5,252.2 L506.5,258.6 L515.5,266.0 L524.5,273.0 L533.5,280.6 L542.5,287.2 L551.5,293.0 L560.5,296.6 L569.5,300.1 L578.5,303.9 L587.5,308.3 L596.5,314.4 L605.5,321.4 L614.5,327.4 L623.5,333.5 L632.5,338.3 L641.5,336.3 L650.5,331.6 L659.5,326.0 L668.5,320.1 L677.5,314.3 L686.5,309.3 L695.5,306.6 L704.5,303.9 L713.5,302.3 L722.5,300.8 L731.5,297.3 L740.5,294.9 L749.5,295.5 L758.5,297.4 L767.5,299.4 L776.5,302.2 L785.5,307.4 L794.5,310.4 L803.5,314.1 L812.5,317.9 L821.5,321.6 L830.5,327.1 L839.5,332.7 L848.5,338.8 L857.5,344.3 L866.5,350.0 L875.5,355.0 L884.5,359.5 L893.5,363.9 L902.5,370.1 L911.5,376.3 L920.5,383.4 L929.5,389.9 L938.5,393.7 L947.5,396.7 L956.5,399.2 L965.5,400.7 L974.5,398.3 L983.5,397.7 L992.5,397.2 L1001.5,397.1 L1010.5,397.3 L1019.5,396.2 L1028.5,396.6 L1037.5,395.8 L1046.5,395.1 L1055.5,393.7 L1064.5,392.3 L1073.5,390.5 L1082.5,388.7 L1091.5,385.6 L1100.5,381.6 L1109.5,378.6 L1118.5,376.7 L1127.5,375.8 L1136.5,375.6 L1145.5,376.5 L1154.5,378.2 L1163.5,380.3 L1172.5,382.8 L1181.5,385.8 L1190.5,387.7 L1199.5,389.3 L1208.5,391.7 L1217.5,393.3 L1226.5,395.1 L1235.5,396.8 L1244.5,398.7 L1253.5,400.6 L1262.5,403.1 L1271.5,405.6 L1280.5,407.5 L1289.5,409.6 L1298.5,410.8 L1307.5,411.9 L1316.5,412.2 L1325.5,411.9 L1334.5,411.9 L1343.5,412.2 L1352.5,412.5 L1361.5,411.6 L1370.5,410.3 L1379.5,409.5 L1388.5,409.0 L1397.5,407.5 L1406.5,406.3 L1415.5,404.5 L1424.5,403.9 L1433.5,403.0 L1442.5,402.3 L1451.5,401.1 L1460.5,400.1 L1469.5,399.2 L1478.5,398.1 L1487.5,397.8 L1496.5,397.0 L1505.5,396.9 L1514.5,396.8 L1523.5,396.3 L1532.5,396.1 L1541.5,395.9 L1550.5,397.1 L1559.5,398.6" stroke="#ff00ff" fill="none" stroke-width="1.25"/>
<path d="M83.5,399.5 L92.5,393.4 L101.5,387.9 L110.5,381.7 L119.5,375.9 L128.5,369.1 L137.5,361.4 L146.5,352.9 L155.5,346.0 L164.5,341.2 L173.5,336.7 L182.5,331.2 L191.5,323.8 L200.5,317.6 L209.5,310.2 L218.5,300.9 L227.5,290.9 L236.5,278.4 L245.5,267.3 L254.5,261.7 L263.5,258.9 L272.5,254.6 L281.5,248.9 L290.5,245.8 L299.5,243.7 L308.5,243.7 L317.5,240.6 L326.5,236.8 L335.5,233.8 L344.5,230.8 L353.5,233.3 L362.5,235.0 L371.5,234.8 L380.5,232.4 L389.5,230.6 L398.5,228.5 L407.5,222.6 L416.5,216.7 L425.5,210.4 L434.5,206.1 L443.5,204.3 L452.5,213.5 L461.5,225.9 L470.5,238.0 L479.5,250.9 L488.5,261.6 L497.5,272.2 L506.5,282.1 L515.5,294.1 L524.5,306.2 L533.5,318.6 L542.5,333.4 L551.5,347.1 L560.5,358.1 L569.5,358.5 L578.5,355.3 L587.5,348.7 L596.5,343.0 L605.5,338.2 L614.5,331.8 L623.5,327.1 L632.5,321.1 L641.5,315.6 L650.5,308.3 L659.5,300.7 L668.5,294.6 L677.5,290.3 L686.5,287.2 L695.5,286.5 L704.5,287.1 L713.5,286.5 L722.5,285.4 L731.5,284.8 L740.5,284.8 L749.5,289.0 L758.5,295.7 L767.5,303.3 L776.5,310.3 L785.5,322.6 L794.5,331.9 L803.5,339.6 L812.5,345.4 L821.5,349.7 L830.5,355.8 L839.5,359.8 L848.5,367.6 L857.5,374.4 L866.5,378.3 L875.5,380.4 L884.5,383.6 L893.5,386.7 L902.5,387.7 L911.5,391.9 L920.5,396.8 L929.5,401.0 L938.5,405.5 L947.5,408.0 L956.5,410.7 L965.5,410.3 L974.5,409.8 L983.5,408.9 L992.5,407.7 L1001.5,406.2 L1010.5,403.7 L1019.5,398.1 L1028.5,392.6 L1037.5,387.5 L1046.5,382.8 L1055.5,378.2 L1064.5,373.3 L1073.5,369.5 L1082.5,367.3 L1091.5,367.1 L1100.5,365.9 L1109.5,366.6 L1118.5,368.1 L1127.5,370.7 L1136.5,374.8 L1145.5,378.1 L1154.5,381.9 L1163.5,385.8 L1172.5,391.4 L1181.5,397.3 L1190.5,401.6 L1199.5,404.7 L1208.5,408.0 L1217.5,411.5 L1226.5,414.2 L1235.5,415.2 L1244.5,415.1 L1253.5,413.5 L1262.5,412.5 L1271.5,411.6 L1280.5,411.1 L1289.5,409.2 L1298.5,407.0 L1307.5,407.3 L1316.5,407.6 L1325.5,407.4 L1334.5,408.2 L1343.5,409.6 L1352.5,411.1 L1361.5,412.3 L1370.5,413.1 L1379.5,412.0 L1388.5,410.2 L1397.5,408.0 L1406.5,406.2 L1415.5,404.0 L1424.5,402.2 L1433.5,400.3 L1442.5,398.0 L1451.5,395.0 L1460.5,391.9 L1469.5,389.6 L1478.5,387.4 L1487.5,386.8 L1496.5,387.0 L1505.5,388.1 L1514.5,390.0 L1523.5,392.0 L1532.5,396.1 L1541.5,398.2 L1550.5,402.8 L1559.5,407.1" stroke="#ffff00" fill="none" stroke-width="1.25"/>
<path d="M83.5,357.1 L92.5,353.7 L101.5,352.4 L110.5,351.6 L119.5,352.6 L128.5,352.7 L137.5,348.3 L146.5,339.6 L155.5,329.9 L164.5,319.8 L173.5,312.0 L182.5,303.6 L191.5,292.0 L200.5,283.2 L209.5,273.1 L218.5,259.2 L227.5,246.8 L236.5,234.7 L245.5,221.9 L254.5,222.0 L263.5,230.4 L272.5,235.4 L281.5,243.2 L290.5,256.1 L299.5,257.0 L308.5,252.6 L317.5,246.7 L326.5,241.5 L335.5,228.0 L344.5,213.2 L353.5,207.7 L362.5,207.5 L371.5,216.8 L380.5,226.9 L389.5,234.9 L398.5,230.6 L407.5,223.7 L416.5,209.9 L425.5,195.3 L434.5,183.1 L443.5,178.7 L452.5,204.3 L461.5,237.2 L470.5,279.5 L479.5,324.0 L488.5,365.8 L497.5,379.7 L506.5,381.0 L515.5,376.5 L524.5,367.4 L533.5,358.0 L542.5,354.5 L551.5,352.0 L560.5,345.1 L569.5,340.3 L578.5,332.5 L587.5,319.2 L596.5,313.5 L605.5,314.0 L614.5,310.3 L623.5,307.7 L632.5,304.8 L641.5,296.0 L650.5,280.2 L659.5,273.5 L668.5,267.5 L677.5,265.0 L686.5,266.6 L695.5,276.0 L704.5,283.8 L713.5,292.6 L722.5,301.4 L731.5,304.1 L740.5,303.1 L749.5,309.8 L758.5,319.8 L767.5,326.5 L776.5,339.6 L785.5,365.8 L794.5,376.5 L803.5,380.7 L812.5,385.6 L821.5,386.4 L830.5,379.0 L839.5,374.0 L848.5,376.9 L857.5,378.4 L866.5,384.1 L875.5,383.8 L884.5,388.4 L893.5,389.2 L902.5,400.6 L911.5,412.0 L920.5,423.3 L929.5,430.9 L938.5,435.3 L947.5,431.6 L956.5,422.8 L965.5,412.1 L974.5,401.1 L983.5,393.1 L992.5,383.0 L1001.5,376.8 L1010.5,372.1 L1019.5,370.1 L1028.5,369.5 L1037.5,370.8 L1046.5,369.9 L1055.5,368.9 L1064.5,367.1 L1073.5,362.8 L1082.5,359.6 L1091.5,360.4 L1100.5,361.1 L1109.5,365.8 L1118.5,372.9 L1127.5,381.0 L1136.5,390.0 L1145.5,401.4 L1154.5,410.5 L1163.5,415.9 L1172.5,422.7 L1181.5,425.8 L1190.5,423.7 L1199.5,418.9 L1208.5,418.1 L1217.5,413.3 L1226.5,409.7 L1235.5,408.3 L1244.5,408.0 L1253.5,404.3 L1262.5,404.0 L1271.5,403.6 L1280.5,405.2 L1289.5,407.2 L1298.5,408.8 L1307.5,410.2 L1316.5,408.7 L1325.5,408.5 L1334.5,410.9 L1343.5,416.6 L1352.5,418.3 L1361.5,420.1 L1370.5,419.1 L1379.5,413.9 L1388.5,405.3 L1397.5,397.1 L1406.5,391.2 L1415.5,385.2 L1424.5,384.6 L1433.5,382.8 L1442.5,382.5 L1451.5,381.9 L1460.5,385.2 L1469.5,385.6 L1478.5,386.7 L1487.5,389.9 L1496.5,393.0 L1505.5,395.4 L1514.5,398.2 L1523.5,403.1 L1532.5,409.5 L1541.5,413.7 L1550.5,420.9 L1559.5,427.1" stroke="#ffffff" fill="none" stroke-width="1.25"/>
<path d="M83.5,343 V343 M83.5,352 V357 M80.5,343.5 H86.5 V351.5 H80.5 Z M110.5,344 V357 M107.0,355.5 H114.0 M128.5,344 V344 M128.5,357 V360 M125.5,344.5 H131.5 V356.5 H125.5 Z M137.5,323 V329 M137.5,338 V338 M134.5,329.5 H140.5 V337.5 H134.5 Z M146.5,306 V313 M146.5,330 V333 M143.5,313.5 H149.5 V329.5 H143.5 Z M155.5,286 V306 M155.5,313 V320 M152.5,306.5 H158.5 V312.5 H152.5 Z M173.5,297 V305 M173.5,308 V312 M170.5,305.5 H176.5 V307.5 H170.5 Z M182.5,287 V287 M182.5,303 V312 M179.5,287.5 H185.5 V302.5 H179.5 Z M191.5,255 V255 M191.5,289 V292 M188.5,255.5 H194.5 V288.5 H188.5 Z M209.5,247 V256 M209.5,262 V276 M206.5,256.5 H212.5 V261.5 H206.5 Z M218.5,235 V235 M218.5,256 V262 M215.5,235.5 H221.5 V255.5 H215.5 Z M227.5,217 V226 M227.5,236 V237 M224.5,226.5 H230.5 V235.5 H224.5 Z M236.5,192 V194 M236.5,212 V212 M233.5,194.5 H239.5 V211.5 H233.5 Z M272.5,238 V251 M272.5,279 V286 M269.5,251.5 H275.5 V278.5 H269.5 Z M281.5,232 V233 M281.5,249 V280 M278.5,233.5 H284.5 V248.5 H278.5 Z M299.5,258 V288 M296.0,261.5 H303.0 M308.5,246 V255 M308.5,261 V267 M305.5,255.5 H311.5 V260.5 H305.5 Z M317.5,216 V221 M317.5,256 V258 M314.5,221.5 H320.5 V255.5 H314.5 Z M326.5,203 V207 M326.5,216 V226 M323.5,207.5 H329.5 V215.5 H323.5 Z M335.5,192 V196 M335.5,205 V218 M332.5,196.5 H338.5 V204.5 H332.5 Z M344.5,182 V187 M344.5,197 V204 M341.5,187.5 H347.5 V196.5 H341.5 Z M362.5,212 V220 M362.5,228 V241 M359.5,220.5 H365.5 V227.5 H359.5 Z M380.5,238 V259 M377.0,246.5 H384.0 M389.5,221 V227 M389.5,242 V250 M386.5,227.5 H392.5 V241.5 H386.5 Z M398.5,195 V206 M398.5,225 V229 M395.5,206.5 H401.5 V224.5 H395.5 Z M407.5,183 V186 M407.5,206 V229 M404.5,186.5 H410.5 V205.5 H404.5 Z M425.5,170 V173 M425.5,186 V195 M422.5,173.5 H428.5 V185.5 H422.5 Z M497.5,358 V383 M497.5,396 V399 M494.5,383.5 H500.5 V395.5 H494.5 Z M506.5,356 V356 M506.5,384 V389 M503.5,356.5 H509.5 V383.5 H503.5 Z M524.5,336 V343 M524.5,361 V366 M521.5,343.5 H527.5 V360.5 H521.5 Z M551.5,342 V344 M551.5,364 V368 M548.5,344.5 H554.5 V363.5 H548.5 Z M560.5,323 V327 M560.5,344 V348 M557.5,327.5 H563.5 V343.5 H557.5 Z M569.5,314 V319 M569.5,329 V331 M566.5,319.5 H572.5 V328.5 H566.5 Z M578.5,307 V307 M578.5,316 V326 M575.5,307.5 H581.5 V315.5 H575.5 Z M587.5,287 V299 M587.5,314 V314 M584.5,299.5 H590.5 V313.5 H584.5 Z M614.5,300 V300 M614.5,330 V331 M611.5,300.5 H617.5 V329.5 H611.5 Z M623.5,278 V294 M623.5,300 V305 M620.5,294.5 H626.5 V299.5 H620.5 Z M632.5,284 V284 M632.5,298 V319 M629.5,284.5 H635.5 V297.5 H629.5 Z M641.5,271 V271 M641.5,288 V294 M638.5,271.5 H644.5 V287.5 H638.5 Z M650.5,250 V251 M650.5,272 V278 M647.5,251.5 H653.5 V271.5 H647.5 Z M668.5,260 V284 M665.0,264.5 H672.0 M731.5,291 V292 M731.5,311 V315 M728.5,292.5 H734.5 V310.5 H728.5 Z M767.5,332 V350 M767.5,357 V362 M764.5,350.5 H770.5 V356.5 H764.5 Z M794.5,393 V393 M794.5,422 V422 M791.5,393.5 H797.5 V421.5 H791.5 Z M803.5,373 V379 M803.5,394 V401 M800.5,379.5 H806.5 V393.5 H800.5 Z M812.5,362 V374 M812.5,378 V383 M809.5,374.5 H815.5 V377.5 H809.5 Z M821.5,361 V362 M821.5,375 V377 M818.5,362.5 H824.5 V374.5 H818.5 Z M839.5,366 V368 M839.5,385 V388 M836.5,368.5 H842.5 V384.5 H836.5 Z M857.5,380 V381 M857.5,391 V395 M854.5,381.5 H860.5 V390.5 H854.5 Z M875.5,384 V385 M875.5,391 V397 M872.5,385.5 H878.5 V390.5 H872.5 Z M920.5,440 V442 M920.5,447 V460 M917.5,442.5 H923.5 V446.5 H917.5 Z M929.5,426 V429 M929.5,441 V445 M926.5,429.5 H932.5 V440.5 H926.5 Z M938.5,417 V420 M938.5,430 V430 M935.5,420.5 H941.5 V429.5 H935.5 Z M947.5,420 V431 M944.0,420.5 H951.0 M956.5,402 V403 M956.5,418 V422 M953.5,403.5 H959.5 V417.5 H953.5 Z M965.5,386 V389 M965.5,402 V406 M962.5,389.5 H968.5 V401.5 H962.5 Z M974.5,365 V374 M974.5,387 V391 M971.5,374.5 H977.5 V386.5 H971.5 Z M992.5,362 V369 M992.5,380 V387 M989.5,369.5 H995.5 V379.5 H989.5 Z M1010.5,364 V365 M1010.5,371 V377 M1007.5,365.5 H1013.5 V370.5 H1007.5 Z M1019.5,362 V364 M1019.5,367 V377 M1016.5,364.5 H1022.5 V366.5 H1016.5 Z M1037.5,371 V384 M1034.0,376.5 H1041.0 M1046.5,366 V368 M1046.5,375 V387 M1043.5,368.5 H1049.5 V374.5 H1043.5 Z M1055.5,353 V360 M1055.5,369 V371 M1052.5,360.5 H1058.5 V368.5 H1052.5 Z M1064.5,354 V356 M1064.5,363 V367 M1061.5,356.5 H1067.5 V362.5 H1061.5 Z M1073.5,350 V364 M1070.0,355.5 H1077.0 M1100.5,359 V363 M1100.5,373 V373 M1097.5,363.5 H1103.5 V372.5 H1097.5 Z M1163.5,409 V418 M1163.5,425 V425 M1160.5,418.5 H1166.5 V424.5 H1160.5 Z M1181.5,419 V442 M1178.0,432.5 H1185.0 M1190.5,409 V410 M1190.5,423 V425 M1187.5,410.5 H1193.5 V422.5 H1187.5 Z M1199.5,399 V400 M1199.5,411 V420 M1196.5,400.5 H1202.5 V410.5 H1196.5 Z M1217.5,403 V410 M1217.5,418 V420 M1214.5,410.5 H1220.5 V417.5 H1214.5 Z M1235.5,403 V403 M1235.5,416 V418 M1232.5,403.5 H1238.5 V415.5 H1232.5 Z M1244.5,399 V399 M1244.5,414 V414 M1241.5,399.5 H1247.5 V413.5 H1241.5 Z M1253.5,391 V395 M1253.5,399 V403 M1250.5,395.5 H1256.5 V398.5 H1250.5 Z M1280.5,408 V420 M1277.0,411.5 H1284.0 M1289.5,404 V419 M1286.0,409.5 H1293.0 M1298.5,403 V404 M1298.5,409 V419 M1295.5,404.5 H1301.5 V408.5 H1295.5 Z M1316.5,405 V405 M1316.5,413 V415 M1313.5,405.5 H1319.5 V412.5 H1313.5 Z M1352.5,418 V423 M1352.5,433 V433 M1349.5,423.5 H1355.5 V432.5 H1349.5 Z M1361.5,414 V414 M1361.5,425 V428 M1358.5,414.5 H1364.5 V424.5 H1358.5 Z M1370.5,404 V406 M1370.5,413 V414 M1367.5,406.5 H1373.5 V412.5 H1367.5 Z M1379.5,394 V394 M1379.5,402 V406 M1376.5,394.5 H1382.5 V401.5 H1376.5 Z M1388.5,384 V389 M1388.5,395 V400 M1385.5,389.5 H1391.5 V394.5 H1385.5 Z M1397.5,381 V382 M1397.5,390 V394 M1394.5,382.5 H1400.5 V389.5 H1394.5 Z M1415.5,372 V376 M1415.5,384 V394 M1412.5,376.5 H1418.5 V383.5 H1412.5 Z M1433.5,379 V380 M1433.5,389 V393 M1430.5,380.5 H1436.5 V388.5 H1430.5 Z M1469.5,390 V399 M1466.0,393.5 H1473.0 M1478.5,383 V386 M1478.5,393 V394 M1475.5,386.5 H1481.5 V392.5 H1475.5 Z M1496.5,398 V403 M1493.0,398.5 H1500.0 M1541.5,415 V418 M1541.5,430 V436 M1538.5,418.5 H1544.5 V429.5 H1538.5 Z M1559.5,428 V438 M1559.5,441 V444 M1556.5,438.5 H1562.5 V440.5 H1556.5 Z" stroke="#ff4040" fill="none" stroke-width="1"/>
<path d="M92.5,343 V357 M101.5,349 V357 M119.5,353 V372 M164.5,282 V327 M200.5,249 V265 M245.5,136 V199 M254.5,189 V268 M263.5,255 V308 M290.5,242 V272 M353.5,193 V244 M371.5,216 V277 M416.5,164 V187 M434.5,162 V174 M443.5,164 V199 M452.5,250 V322 M461.5,308 V363 M470.5,347 V394 M479.5,371 V413 M488.5,387 V413 M515.5,343 V368 M533.5,334 V353 M542.5,335 V370 M596.5,299 V329 M605.5,303 V338 M659.5,247 V272 M677.5,252 V272 M686.5,268 V296 M695.5,276 V299 M704.5,297 V322 M713.5,295 V329 M722.5,305 V331 M740.5,287 V303 M749.5,291 V340 M758.5,338 V371 M776.5,343 V364 M785.5,351 V424 M830.5,356 V387 M848.5,364 V399 M866.5,380 V394 M884.5,380 V393 M893.5,382 V403 M902.5,397 V441 M911.5,432 V450 M983.5,374 V391 M1001.5,370 V387 M1028.5,354 V384 M1082.5,342 V367 M1091.5,355 V379 M1109.5,363 V387 M1118.5,378 V395 M1127.5,380 V400 M1136.5,398 V417 M1145.5,414 V430 M1154.5,406 V427 M1172.5,414 V446 M1208.5,399 V414 M1226.5,399 V414 M1262.5,392 V410 M1271.5,406 V417 M1307.5,401 V415 M1325.5,401 V414 M1334.5,410 V423 M1343.5,419 V432 M1406.5,380 V392 M1424.5,371 V392 M1442.5,377 V385 M1451.5,373 V385 M1460.5,382 V392 M1487.5,382 V401 M1505.5,393 V412 M1514.5,401 V411 M1523.5,404 V413 M1532.5,411 V429 M1550.5,417 V440" stroke="#00ffff" fill="none" stroke-width="1"/>
<path d="M89.0,343 h7 V351 h-7 Z M98.0,349 h7 V357 h-7 Z M116.0,356 h7 V357 h-7 Z M161.0,305 h7 V306 h-7 Z M197.0,253 h7 V262 h-7 Z M242.0,194 h7 V199 h-7 Z M251.0,194 h7 V257 h-7 Z M260.0,258 h7 V277 h-7 Z M287.0,246 h7 V263 h-7 Z M350.0,193 h7 V228 h-7 Z M368.0,220 h7 V254 h-7 Z M413.0,179 h7 V185 h-7 Z M431.0,164 h7 V166 h-7 Z M440.0,170 h7 V184 h-7 Z M449.0,251 h7 V314 h-7 Z M458.0,312 h7 V349 h-7 Z M467.0,349 h7 V384 h-7 Z M476.0,383 h7 V389 h-7 Z M485.0,390 h7 V393 h-7 Z M512.0,354 h7 V362 h-7 Z M530.0,344 h7 V346 h-7 Z M539.0,344 h7 V366 h-7 Z M593.0,299 h7 V315 h-7 Z M602.0,319 h7 V330 h-7 Z M656.0,250 h7 V267 h-7 Z M674.0,266 h7 V272 h-7 Z M683.0,272 h7 V279 h-7 Z M692.0,276 h7 V298 h-7 Z M701.0,297 h7 V306 h-7 Z M710.0,305 h7 V308 h-7 Z M719.0,307 h7 V316 h-7 Z M737.0,291 h7 V293 h-7 Z M746.0,291 h7 V340 h-7 Z M755.0,342 h7 V358 h-7 Z M773.0,348 h7 V358 h-7 Z M782.0,353 h7 V424 h-7 Z M827.0,365 h7 V387 h-7 Z M845.0,368 h7 V394 h-7 Z M863.0,380 h7 V391 h-7 Z M881.0,388 h7 V391 h-7 Z M890.0,388 h7 V398 h-7 Z M899.0,398 h7 V438 h-7 Z M908.0,436 h7 V448 h-7 Z M980.0,376 h7 V380 h-7 Z M998.0,370 h7 V372 h-7 Z M1025.0,360 h7 V377 h-7 Z M1079.0,356 h7 V360 h-7 Z M1088.0,357 h7 V372 h-7 Z M1106.0,363 h7 V379 h-7 Z M1115.0,378 h7 V391 h-7 Z M1124.0,389 h7 V400 h-7 Z M1133.0,399 h7 V417 h-7 Z M1142.0,417 h7 V421 h-7 Z M1151.0,421 h7 V424 h-7 Z M1169.0,417 h7 V433 h-7 Z M1205.0,400 h7 V414 h-7 Z M1223.0,410 h7 V414 h-7 Z M1259.0,395 h7 V408 h-7 Z M1268.0,408 h7 V413 h-7 Z M1304.0,403 h7 V415 h-7 Z M1322.0,407 h7 V410 h-7 Z M1331.0,412 h7 V421 h-7 Z M1340.0,422 h7 V432 h-7 Z M1403.0,382 h7 V385 h-7 Z M1421.0,375 h7 V391 h-7 Z M1439.0,380 h7 V381 h-7 Z M1448.0,380 h7 V382 h-7 Z M1457.0,382 h7 V392 h-7 Z M1484.0,383 h7 V397 h-7 Z M1502.0,394 h7 V404 h-7 Z M1511.0,403 h7 V407 h-7 Z M1520.0,406 h7 V410 h-7 Z M1529.0,411 h7 V429 h-7 Z M1547.0,419 h7 V440 h-7 Z" fill="#00ffff" stroke="none"/>
<g fill="none" stroke="#ff1010" stroke-width="1.05"><circle cx="92.5" cy="417.0" r="2.3"/><circle cx="101.5" cy="415.0" r="2.3"/><circle cx="110.5" cy="410.0" r="2.3"/><circle cx="119.5" cy="405.0" r="2.3"/><circle cx="128.5" cy="400.7" r="2.3"/><circle cx="137.5" cy="396.0" r="2.3"/><circle cx="146.5" cy="390.6" r="2.3"/><circle cx="155.5" cy="382.6" r="2.3"/><circle cx="164.5" cy="369.7" r="2.3"/><circle cx="173.5" cy="360.0" r="2.3"/><circle cx="182.5" cy="351.0" r="2.3"/><circle cx="191.5" cy="344.0" r="2.3"/><circle cx="200.5" cy="332.0" r="2.3"/><circle cx="209.5" cy="318.0" r="2.3"/><circle cx="218.5" cy="305.0" r="2.3"/><circle cx="227.5" cy="291.7" r="2.3"/><circle cx="236.5" cy="277.0" r="2.3"/><circle cx="245.5" cy="259.5" r="2.3"/><circle cx="254.5" cy="235.0" r="2.3"/><circle cx="425.5" cy="276.5" r="2.3"/><circle cx="434.5" cy="274.3" r="2.3"/><circle cx="443.5" cy="269.4" r="2.3"/><circle cx="452.5" cy="265.0" r="2.3"/><circle cx="587.5" cy="399.2" r="2.3"/><circle cx="596.5" cy="397.6" r="2.3"/><circle cx="605.5" cy="395.5" r="2.3"/><circle cx="614.5" cy="393.3" r="2.3"/><circle cx="623.5" cy="391.5" r="2.3"/><circle cx="632.5" cy="386.4" r="2.3"/><circle cx="641.5" cy="382.6" r="2.3"/><circle cx="650.5" cy="376.0" r="2.3"/><circle cx="659.5" cy="365.7" r="2.3"/><circle cx="668.5" cy="353.4" r="2.3"/><circle cx="677.5" cy="344.0" r="2.3"/><circle cx="686.5" cy="333.3" r="2.3"/><circle cx="695.5" cy="325.2" r="2.3"/><circle cx="704.5" cy="317.5" r="2.3"/><circle cx="965.5" cy="460.2" r="2.3"/><circle cx="974.5" cy="459.5" r="2.3"/><circle cx="983.5" cy="455.3" r="2.3"/><circle cx="992.5" cy="451.3" r="2.3"/><circle cx="1001.5" cy="448.4" r="2.3"/><circle cx="1010.5" cy="445.4" r="2.3"/><circle cx="1019.5" cy="440.6" r="2.3"/><circle cx="1028.5" cy="434.2" r="2.3"/><circle cx="1037.5" cy="426.2" r="2.3"/><circle cx="1046.5" cy="418.4" r="2.3"/><circle cx="1055.5" cy="412.3" r="2.3"/><circle cx="1064.5" cy="405.4" r="2.3"/><circle cx="1073.5" cy="399.7" r="2.3"/><circle cx="1082.5" cy="392.3" r="2.3"/><circle cx="1091.5" cy="384.8" r="2.3"/><circle cx="1100.5" cy="378.2" r="2.3"/><circle cx="1109.5" cy="378.2" r="2.3"/><circle cx="1253.5" cy="445.4" r="2.3"/><circle cx="1262.5" cy="444.5" r="2.3"/><circle cx="1271.5" cy="443.5" r="2.3"/><circle cx="1280.5" cy="442.4" r="2.3"/><circle cx="1289.5" cy="441.4" r="2.3"/><circle cx="1298.5" cy="440.4" r="2.3"/><circle cx="1307.5" cy="439.5" r="2.3"/><circle cx="1316.5" cy="438.5" r="2.3"/><circle cx="1325.5" cy="437.5" r="2.3"/><circle cx="1334.5" cy="436.6" r="2.3"/><circle cx="1343.5" cy="435.9" r="2.3"/><circle cx="1352.5" cy="435.9" r="2.3"/><circle cx="1361.5" cy="435.9" r="2.3"/><circle cx="1370.5" cy="434.6" r="2.3"/><circle cx="1379.5" cy="434.6" r="2.3"/><circle cx="1388.5" cy="432.5" r="2.3"/><circle cx="1397.5" cy="429.5" r="2.3"/><circle cx="1406.5" cy="425.3" r="2.3"/><circle cx="1415.5" cy="421.5" r="2.3"/><circle cx="1424.5" cy="415.5" r="2.3"/><circle cx="1433.5" cy="409.3" r="2.3"/><circle cx="1442.5" cy="404.4" r="2.3"/><circle cx="1451.5" cy="399.7" r="2.3"/><circle cx="1460.5" cy="395.4" r="2.3"/><circle cx="1469.5" cy="394.7" r="2.3"/></g>
<g fill="none" stroke="#00f000" stroke-width="1.05"><circle cx="263.5" cy="135.2" r="2.3"/><circle cx="272.5" cy="139.2" r="2.3"/><circle cx="281.5" cy="142.5" r="2.3"/><circle cx="290.5" cy="146.0" r="2.3"/><circle cx="299.5" cy="149.5" r="2.3"/><circle cx="308.5" cy="152.0" r="2.3"/><circle cx="317.5" cy="155.3" r="2.3"/><circle cx="326.5" cy="158.0" r="2.3"/><circle cx="335.5" cy="161.0" r="2.3"/><circle cx="344.5" cy="164.5" r="2.3"/><circle cx="353.5" cy="167.4" r="2.3"/><circle cx="362.5" cy="169.7" r="2.3"/><circle cx="371.5" cy="172.0" r="2.3"/><circle cx="380.5" cy="174.5" r="2.3"/><circle cx="389.5" cy="176.8" r="2.3"/><circle cx="398.5" cy="179.4" r="2.3"/><circle cx="407.5" cy="181.7" r="2.3"/><circle cx="416.5" cy="182.3" r="2.3"/><circle cx="461.5" cy="161.0" r="2.3"/><circle cx="470.5" cy="165.3" r="2.3"/><circle cx="479.5" cy="174.5" r="2.3"/><circle cx="488.5" cy="188.3" r="2.3"/><circle cx="497.5" cy="206.0" r="2.3"/><circle cx="506.5" cy="223.4" r="2.3"/><circle cx="515.5" cy="238.3" r="2.3"/><circle cx="524.5" cy="252.5" r="2.3"/><circle cx="533.5" cy="265.0" r="2.3"/><circle cx="542.5" cy="277.8" r="2.3"/><circle cx="551.5" cy="288.5" r="2.3"/><circle cx="560.5" cy="298.7" r="2.3"/><circle cx="569.5" cy="307.8" r="2.3"/><circle cx="578.5" cy="314.5" r="2.3"/><circle cx="713.5" cy="247.5" r="2.3"/><circle cx="722.5" cy="249.3" r="2.3"/><circle cx="731.5" cy="252.3" r="2.3"/><circle cx="740.5" cy="255.5" r="2.3"/><circle cx="749.5" cy="259.0" r="2.3"/><circle cx="758.5" cy="263.2" r="2.3"/><circle cx="767.5" cy="272.6" r="2.3"/><circle cx="776.5" cy="280.4" r="2.3"/><circle cx="785.5" cy="287.4" r="2.3"/><circle cx="794.5" cy="301.5" r="2.3"/><circle cx="803.5" cy="313.3" r="2.3"/><circle cx="812.5" cy="324.3" r="2.3"/><circle cx="821.5" cy="334.2" r="2.3"/><circle cx="830.5" cy="343.9" r="2.3"/><circle cx="839.5" cy="351.2" r="2.3"/><circle cx="848.5" cy="356.5" r="2.3"/><circle cx="857.5" cy="363.2" r="2.3"/><circle cx="866.5" cy="364.3" r="2.3"/><circle cx="875.5" cy="370.2" r="2.3"/><circle cx="884.5" cy="375.3" r="2.3"/><circle cx="893.5" cy="377.4" r="2.3"/><circle cx="902.5" cy="379.7" r="2.3"/><circle cx="911.5" cy="382.2" r="2.3"/><circle cx="920.5" cy="393.4" r="2.3"/><circle cx="929.5" cy="405.4" r="2.3"/><circle cx="938.5" cy="415.5" r="2.3"/><circle cx="947.5" cy="415.5" r="2.3"/><circle cx="956.5" cy="415.5" r="2.3"/><circle cx="1118.5" cy="342.2" r="2.3"/><circle cx="1127.5" cy="343.4" r="2.3"/><circle cx="1136.5" cy="345.3" r="2.3"/><circle cx="1145.5" cy="350.7" r="2.3"/><circle cx="1154.5" cy="356.5" r="2.3"/><circle cx="1163.5" cy="362.5" r="2.3"/><circle cx="1172.5" cy="367.2" r="2.3"/><circle cx="1181.5" cy="375.5" r="2.3"/><circle cx="1190.5" cy="382.6" r="2.3"/><circle cx="1199.5" cy="388.5" r="2.3"/><circle cx="1208.5" cy="395.0" r="2.3"/><circle cx="1217.5" cy="399.7" r="2.3"/><circle cx="1226.5" cy="399.7" r="2.3"/><circle cx="1235.5" cy="401.4" r="2.3"/><circle cx="1244.5" cy="401.4" r="2.3"/><circle cx="1478.5" cy="371.7" r="2.3"/><circle cx="1487.5" cy="372.7" r="2.3"/><circle cx="1496.5" cy="373.0" r="2.3"/><circle cx="1505.5" cy="375.6" r="2.3"/><circle cx="1514.5" cy="378.6" r="2.3"/><circle cx="1523.5" cy="380.6" r="2.3"/><circle cx="1532.5" cy="383.6" r="2.3"/><circle cx="1541.5" cy="389.2" r="2.3"/><circle cx="1550.5" cy="395.4" r="2.3"/><circle cx="1559.5" cy="402.6" r="2.3"/></g>
<path d="M246.5,135.5 L263.5,308.5 L434.0,162.0 L488.5,413.0 L659.5,247.5 L919.0,459.0 M246.5,135.5 L919,459" stroke="#c8c8c8" stroke-width="2" fill="none" stroke-linejoin="round"/>
<g fill="#ffff00" fill-opacity="0.285"><rect x="1672" y="164" width="2" height="10"/><rect x="1671" y="434" width="3" height="10"/><rect x="1277" y="179" width="397" height="10"/><rect x="1471" y="194" width="203" height="10"/><rect x="1523" y="209" width="151" height="10"/><rect x="1080" y="224" width="594" height="10"/><rect x="1012" y="239" width="662" height="10"/><rect x="80" y="254" width="1594" height="10"/><rect x="1172" y="269" width="502" height="10"/><rect x="1258" y="284" width="416" height="10"/><rect x="1214" y="299" width="460" height="10"/><rect x="1281" y="314" width="393" height="10"/><rect x="1646" y="329" width="28" height="10"/><rect x="988" y="344" width="686" height="10"/><rect x="1018" y="359" width="656" height="10"/><rect x="1055" y="374" width="619" height="10"/><rect x="156" y="389" width="1518" height="10"/><rect x="139" y="404" width="1535" height="10"/><rect x="1162" y="419" width="512" height="10"/></g>
<path d="M929.5,107 V472 M1559.5,107 V472" stroke="#ffff00" stroke-width="1" stroke-dasharray="4,3" fill="none"/>
<path d="M80.0,606.5 H87.0 M107.5,604.5 H113.5 V607.5 H107.5 Z M125.0,607.0 H132.0 M134.0,607.0 H141.0 M143.5,603.5 H149.5 V607.5 H143.5 Z M152.5,599.5 H158.5 V607.5 H152.5 Z M170.5,598.5 H176.5 V607.5 H170.5 Z M179.5,592.5 H185.5 V607.5 H179.5 Z M188.5,580.5 H194.5 V607.5 H188.5 Z M206.5,534.5 H212.5 V607.5 H206.5 Z M215.5,540.5 H221.5 V607.5 H215.5 Z M224.5,532.5 H230.5 V607.5 H224.5 Z M233.5,588.5 H239.5 V607.5 H233.5 Z M269.5,515.5 H275.5 V607.5 H269.5 Z M278.5,542.5 H284.5 V607.5 H278.5 Z M296.5,550.5 H302.5 V607.5 H296.5 Z M305.5,560.5 H311.5 V607.5 H305.5 Z M314.5,554.5 H320.5 V607.5 H314.5 Z M323.5,556.5 H329.5 V607.5 H323.5 Z M332.5,560.5 H338.5 V607.5 H332.5 Z M341.5,566.5 H347.5 V607.5 H341.5 Z M359.5,584.5 H365.5 V607.5 H359.5 Z M377.5,603.5 H383.5 V607.5 H377.5 Z M386.5,606.5 H392.5 V607.5 H386.5 Z M395.0,607.0 H402.0 M404.0,607.0 H411.0 M422.0,607.5 H429.0 M494.0,607.5 H501.0 M503.0,607.0 H510.0 M521.0,606.5 H528.0 M548.0,607.0 H555.0 M557.0,607.5 H564.0 M566.0,607.5 H573.0 M575.0,607.0 H582.0 M584.5,605.5 H590.5 V607.5 H584.5 Z M611.5,600.5 H617.5 V607.5 H611.5 Z M620.5,594.5 H626.5 V607.5 H620.5 Z M629.5,592.5 H635.5 V607.5 H629.5 Z M638.5,590.5 H644.5 V607.5 H638.5 Z M647.5,572.5 H653.5 V607.5 H647.5 Z M665.5,556.5 H671.5 V607.5 H665.5 Z M728.5,570.5 H734.5 V607.5 H728.5 Z M764.5,546.5 H770.5 V607.5 H764.5 Z M791.5,529.5 H797.5 V607.5 H791.5 Z M800.5,546.5 H806.5 V607.5 H800.5 Z M809.5,541.5 H815.5 V607.5 H809.5 Z M818.5,553.5 H824.5 V607.5 H818.5 Z M836.5,567.5 H842.5 V607.5 H836.5 Z M854.5,602.5 H860.5 V607.5 H854.5 Z M872.0,607.0 H879.0 M917.0,607.5 H924.0 M926.0,607.5 H933.0 M935.0,607.5 H942.0 M944.0,607.5 H951.0 M953.0,607.5 H960.0 M962.0,607.5 H969.0 M971.0,607.5 H978.0 M989.0,607.5 H996.0 M1007.0,607.5 H1014.0 M1016.0,607.5 H1023.0 M1034.0,607.5 H1041.0 M1043.0,607.5 H1050.0 M1052.0,607.5 H1059.0 M1061.0,607.5 H1068.0 M1070.0,607.5 H1077.0 M1097.5,593.5 H1103.5 V607.5 H1097.5 Z M1160.5,549.5 H1166.5 V607.5 H1160.5 Z M1178.5,548.5 H1184.5 V607.5 H1178.5 Z M1187.5,549.5 H1193.5 V607.5 H1187.5 Z M1196.5,551.5 H1202.5 V607.5 H1196.5 Z M1214.5,562.5 H1220.5 V607.5 H1214.5 Z M1232.5,565.5 H1238.5 V607.5 H1232.5 Z M1241.5,554.5 H1247.5 V607.5 H1241.5 Z M1250.5,544.5 H1256.5 V607.5 H1250.5 Z M1277.5,567.5 H1283.5 V607.5 H1277.5 Z M1286.5,562.5 H1292.5 V607.5 H1286.5 Z M1295.5,566.5 H1301.5 V607.5 H1295.5 Z M1313.5,604.5 H1319.5 V607.5 H1313.5 Z M1349.0,607.5 H1356.0 M1358.0,607.5 H1365.0 M1367.0,607.5 H1374.0 M1376.0,607.5 H1383.0 M1385.0,607.5 H1392.0 M1394.0,607.5 H1401.0 M1412.0,607.5 H1419.0 M1430.0,607.5 H1437.0 M1466.0,607.5 H1473.0 M1475.0,607.5 H1482.0 M1493.0,607.5 H1500.0 M1538.5,600.5 H1544.5 V607.5 H1538.5 Z M1556.5,580.5 H1562.5 V607.5 H1556.5 Z" stroke="#ff4040" fill="none"/>
<path d="M89.0,606 h7 V608 h-7 Z M98.0,606 h7 V608 h-7 Z M116.0,606 h7 V608 h-7 Z M161.0,597 h7 V608 h-7 Z M197.0,559 h7 V608 h-7 Z M242.0,509 h7 V608 h-7 Z M251.0,521 h7 V608 h-7 Z M260.0,506 h7 V608 h-7 Z M287.0,556 h7 V608 h-7 Z M350.0,552 h7 V608 h-7 Z M368.0,597 h7 V608 h-7 Z M413.0,607 h7 V608 h-7 Z M431.0,607 h7 V608 h-7 Z M440.0,607 h7 V608 h-7 Z M449.0,607 h7 V608 h-7 Z M458.0,607 h7 V608 h-7 Z M467.0,607 h7 V608 h-7 Z M476.0,606 h7 V608 h-7 Z M485.0,606 h7 V608 h-7 Z M512.0,606 h7 V608 h-7 Z M530.0,605 h7 V608 h-7 Z M539.0,604 h7 V608 h-7 Z M593.0,602 h7 V608 h-7 Z M602.0,601 h7 V608 h-7 Z M656.0,582 h7 V608 h-7 Z M674.0,552 h7 V608 h-7 Z M683.0,548 h7 V608 h-7 Z M692.0,590 h7 V608 h-7 Z M701.0,552 h7 V608 h-7 Z M710.0,554 h7 V608 h-7 Z M719.0,542 h7 V608 h-7 Z M737.0,565 h7 V608 h-7 Z M746.0,549 h7 V608 h-7 Z M755.0,532 h7 V608 h-7 Z M773.0,542 h7 V608 h-7 Z M782.0,522 h7 V608 h-7 Z M827.0,546 h7 V608 h-7 Z M845.0,582 h7 V608 h-7 Z M863.0,605 h7 V608 h-7 Z M881.0,607 h7 V608 h-7 Z M890.0,607 h7 V608 h-7 Z M899.0,607 h7 V608 h-7 Z M908.0,607 h7 V608 h-7 Z M980.0,607 h7 V608 h-7 Z M998.0,607 h7 V608 h-7 Z M1025.0,607 h7 V608 h-7 Z M1079.0,600 h7 V608 h-7 Z M1088.0,597 h7 V608 h-7 Z M1106.0,581 h7 V608 h-7 Z M1115.0,562 h7 V608 h-7 Z M1124.0,556 h7 V608 h-7 Z M1133.0,554 h7 V608 h-7 Z M1142.0,588 h7 V608 h-7 Z M1151.0,544 h7 V608 h-7 Z M1169.0,538 h7 V608 h-7 Z M1205.0,573 h7 V608 h-7 Z M1223.0,555 h7 V608 h-7 Z M1259.0,549 h7 V608 h-7 Z M1268.0,564 h7 V608 h-7 Z M1304.0,594 h7 V608 h-7 Z M1322.0,606 h7 V608 h-7 Z M1331.0,606 h7 V608 h-7 Z M1340.0,607 h7 V608 h-7 Z M1403.0,607 h7 V608 h-7 Z M1421.0,607 h7 V608 h-7 Z M1439.0,607 h7 V608 h-7 Z M1448.0,607 h7 V608 h-7 Z M1457.0,607 h7 V608 h-7 Z M1484.0,607 h7 V608 h-7 Z M1502.0,607 h7 V608 h-7 Z M1511.0,607 h7 V608 h-7 Z M1520.0,606 h7 V608 h-7 Z M1529.0,603 h7 V608 h-7 Z M1547.0,590 h7 V608 h-7 Z" fill="#00ffff"/>
<path d="M83.5,606.5 L92.5,606.5 L101.5,606.5 L110.5,606.4 L119.5,606.4 L128.5,606.4 L137.5,606.4 L146.5,606.2 L155.5,605.8 L164.5,605.4 L173.5,605.0 L182.5,604.3 L191.5,603.0 L200.5,600.7 L209.5,597.3 L218.5,594.1 L227.5,590.5 L236.5,589.6 L245.5,585.0 L254.5,580.9 L263.5,576.2 L272.5,571.8 L281.5,568.7 L290.5,566.3 L299.5,563.8 L308.5,561.6 L317.5,559.1 L326.5,556.7 L335.5,554.6 L344.5,553.0 L353.5,550.9 L362.5,550.2 L371.5,550.5 L380.5,551.6 L389.5,553.8 L398.5,557.3 L407.5,560.5 L416.5,564.0 L425.5,564.9 L434.5,569.6 L443.5,573.7 L452.5,578.5 L461.5,582.9 L470.5,586.0 L479.5,588.4 L488.5,591.1 L497.5,593.3 L506.5,595.8 L515.5,598.2 L524.5,600.4 L533.5,602.3 L542.5,604.8 L551.5,605.9 L560.5,606.3 L569.5,606.5 L578.5,606.5 L587.5,606.5 L596.5,606.3 L605.5,606.0 L614.5,605.7 L623.5,605.0 L632.5,604.3 L641.5,603.5 L650.5,601.8 L659.5,600.6 L668.5,598.2 L677.5,595.7 L686.5,592.9 L695.5,592.1 L704.5,589.5 L713.5,587.0 L722.5,584.0 L731.5,582.4 L740.5,580.5 L749.5,577.7 L758.5,574.1 L767.5,571.3 L776.5,568.3 L785.5,564.5 L794.5,561.0 L803.5,558.5 L812.5,555.9 L821.5,554.1 L830.5,552.0 L839.5,551.8 L848.5,551.8 L857.5,554.0 L866.5,556.5 L875.5,559.3 L884.5,560.1 L893.5,562.8 L902.5,565.3 L911.5,568.3 L920.5,570.1 L929.5,572.1 L938.5,574.8 L947.5,578.4 L956.5,581.3 L965.5,584.3 L974.5,588.4 L983.5,592.1 L992.5,595.0 L1001.5,598.2 L1010.5,600.7 L1019.5,603.6 L1028.5,605.5 L1037.5,606.7 L1046.5,606.9 L1055.5,607.0 L1064.5,607.0 L1073.5,607.0 L1082.5,606.7 L1091.5,606.2 L1100.5,605.6 L1109.5,604.3 L1118.5,602.2 L1127.5,599.8 L1136.5,597.3 L1145.5,596.4 L1154.5,593.4 L1163.5,590.6 L1172.5,587.3 L1181.5,584.5 L1190.5,581.7 L1199.5,579.1 L1208.5,577.5 L1217.5,575.3 L1226.5,572.9 L1235.5,570.8 L1244.5,568.3 L1253.5,565.3 L1262.5,562.6 L1271.5,560.9 L1280.5,559.5 L1289.5,557.9 L1298.5,557.2 L1307.5,558.7 L1316.5,561.0 L1325.5,563.5 L1334.5,564.3 L1343.5,567.3 L1352.5,570.1 L1361.5,573.4 L1370.5,576.2 L1379.5,579.0 L1388.5,581.6 L1397.5,583.2 L1406.5,585.4 L1415.5,587.9 L1424.5,589.9 L1433.5,592.4 L1442.5,595.4 L1451.5,598.1 L1460.5,600.2 L1469.5,602.1 L1478.5,604.2 L1487.5,606.2 L1496.5,606.8 L1505.5,606.9 L1514.5,607.0 L1523.5,607.0 L1532.5,606.8 L1541.5,606.4 L1550.5,605.6 L1559.5,604.3" stroke="#ffff00" fill="none" stroke-width="1.25"/>
<path d="M83.5,606.4 L92.5,606.4 L101.5,606.4 L110.5,606.0 L119.5,605.9 L128.5,606.0 L137.5,606.0 L146.5,605.4 L155.5,604.2 L164.5,602.4 L173.5,600.7 L182.5,597.7 L191.5,592.9 L200.5,585.0 L209.5,572.3 L218.5,560.7 L227.5,548.9 L236.5,550.5 L245.5,540.5 L254.5,537.9 L263.5,531.3 L272.5,527.7 L281.5,518.5 L290.5,528.0 L299.5,533.9 L308.5,544.7 L317.5,552.5 L326.5,555.4 L335.5,556.0 L344.5,559.1 L353.5,557.4 L362.5,563.4 L371.5,571.7 L380.5,580.4 L389.5,588.4 L398.5,599.2 L407.5,603.8 L416.5,605.8 L425.5,606.5 L434.5,606.8 L443.5,606.9 L452.5,607.0 L461.5,607.0 L470.5,607.0 L479.5,606.9 L488.5,606.8 L497.5,606.8 L506.5,606.7 L515.5,606.5 L524.5,606.4 L533.5,606.2 L542.5,605.7 L551.5,605.7 L560.5,605.9 L569.5,606.1 L578.5,606.3 L587.5,606.5 L596.5,605.6 L605.5,604.5 L614.5,603.0 L623.5,600.5 L632.5,597.7 L641.5,595.2 L650.5,589.2 L659.5,585.8 L668.5,578.4 L677.5,570.5 L686.5,562.2 L695.5,565.8 L704.5,559.8 L713.5,559.4 L722.5,557.4 L731.5,561.8 L740.5,557.0 L749.5,556.3 L758.5,551.9 L767.5,552.8 L776.5,547.1 L785.5,538.5 L794.5,534.5 L803.5,537.2 L812.5,536.0 L821.5,538.1 L830.5,543.0 L839.5,550.6 L848.5,558.0 L857.5,570.3 L866.5,580.8 L875.5,592.8 L884.5,600.7 L893.5,605.6 L902.5,606.6 L911.5,606.9 L920.5,607.0 L929.5,607.0 L938.5,607.0 L947.5,607.0 L956.5,607.0 L965.5,607.0 L974.5,607.0 L983.5,607.0 L992.5,607.0 L1001.5,607.0 L1010.5,607.0 L1019.5,607.0 L1028.5,607.0 L1037.5,607.0 L1046.5,607.0 L1055.5,607.0 L1064.5,607.0 L1073.5,607.0 L1082.5,605.7 L1091.5,603.7 L1100.5,601.0 L1109.5,595.8 L1118.5,586.9 L1127.5,578.1 L1136.5,569.5 L1145.5,568.4 L1154.5,561.0 L1163.5,558.3 L1172.5,554.6 L1181.5,553.3 L1190.5,545.5 L1199.5,547.0 L1208.5,551.9 L1217.5,556.6 L1226.5,558.1 L1235.5,561.2 L1244.5,561.8 L1253.5,556.0 L1262.5,553.6 L1271.5,555.4 L1280.5,555.9 L1289.5,557.3 L1298.5,561.6 L1307.5,570.7 L1316.5,578.7 L1325.5,586.3 L1334.5,595.3 L1343.5,603.6 L1352.5,606.1 L1361.5,606.6 L1370.5,606.9 L1379.5,607.0 L1388.5,607.0 L1397.5,607.0 L1406.5,607.0 L1415.5,607.0 L1424.5,607.0 L1433.5,607.0 L1442.5,607.0 L1451.5,607.0 L1460.5,607.0 L1469.5,607.0 L1478.5,607.0 L1487.5,607.0 L1496.5,607.0 L1505.5,607.0 L1514.5,607.0 L1523.5,606.9 L1532.5,606.1 L1541.5,604.6 L1550.5,601.1 L1559.5,595.6" stroke="#ffffff" fill="none" stroke-width="1.2"/>
<path d="M83.5,679.0 V660.5 M92.5,679.0 V661.9 M101.5,679.0 V664.6 M110.5,679.0 V667.1 M119.5,679.0 V669.7 M128.5,679.0 V670.4 M137.5,679.0 V669.5 M146.5,679.0 V667.6 M155.5,679.0 V666.4 M164.5,679.0 V666.7 M173.5,679.0 V667.7 M182.5,679.0 V667.0 M191.5,679.0 V663.2 M200.5,679.0 V663.1 M209.5,679.0 V663.6 M218.5,679.0 V662.3 M227.5,679.0 V661.8 M236.5,679.0 V658.6 M245.5,679.0 V659.0 M254.5,679.0 V669.0 M344.5,679.0 V677.0 M425.5,679.0 V677.2 M434.5,679.0 V674.9 M443.5,679.0 V676.6 M569.5,679.0 V676.9 M578.5,679.0 V670.8 M587.5,679.0 V665.8 M596.5,679.0 V665.2 M605.5,679.0 V667.2 M614.5,679.0 V664.6 M623.5,679.0 V662.5 M632.5,679.0 V660.5 M641.5,679.0 V658.1 M650.5,679.0 V654.7 M659.5,679.0 V655.9 M668.5,679.0 V657.4 M677.5,679.0 V660.5 M686.5,679.0 V664.3 M695.5,679.0 V670.1 M704.5,679.0 V675.3 M956.5,679.0 V675.5 M965.5,679.0 V670.2 M974.5,679.0 V665.0 M983.5,679.0 V662.7 M992.5,679.0 V660.3 M1001.5,679.0 V659.8 M1010.5,679.0 V659.3 M1019.5,679.0 V659.6 M1028.5,679.0 V662.2 M1037.5,679.0 V664.4 M1046.5,679.0 V665.4 M1055.5,679.0 V665.5 M1064.5,679.0 V665.5 M1073.5,679.0 V666.2 M1082.5,679.0 V667.8 M1091.5,679.0 V671.1 M1100.5,679.0 V672.5 M1109.5,679.0 V675.8 M1235.5,679.0 V677.4 M1244.5,679.0 V675.3 M1253.5,679.0 V673.6 M1262.5,679.0 V674.2 M1271.5,679.0 V675.4 M1280.5,679.0 V676.0 M1289.5,679.0 V676.1 M1298.5,679.0 V675.5 M1307.5,679.0 V676.6 M1316.5,679.0 V676.0 M1325.5,679.0 V676.4 M1334.5,679.0 V678.0 M1370.5,679.0 V677.4 M1379.5,679.0 V674.5 M1388.5,679.0 V672.1 M1397.5,679.0 V670.0 M1406.5,679.0 V669.3 M1415.5,679.0 V668.1 M1424.5,679.0 V670.1 M1433.5,679.0 V670.3 M1442.5,679.0 V671.0 M1451.5,679.0 V672.0 M1460.5,679.0 V674.4 M1469.5,679.0 V676.4 M1478.5,679.0 V676.9 M1487.5,679.0 V678.0" stroke="#ff4040" fill="none"/>
<path d="M263.5,679.0 V680.0 M272.5,679.0 V682.9 M281.5,679.0 V683.3 M290.5,679.0 V688.1 M299.5,679.0 V691.1 M308.5,679.0 V692.2 M317.5,679.0 V688.3 M326.5,679.0 V684.0 M335.5,679.0 V680.1 M353.5,679.0 V681.4 M362.5,679.0 V683.7 M371.5,679.0 V690.0 M380.5,679.0 V692.8 M389.5,679.0 V691.9 M398.5,679.0 V688.3 M407.5,679.0 V683.3 M416.5,679.0 V680.3 M452.5,679.0 V696.1 M461.5,679.0 V712.7 M470.5,679.0 V726.5 M479.5,679.0 V733.6 M488.5,679.0 V735.9 M497.5,679.0 V733.1 M506.5,679.0 V724.6 M515.5,679.0 V717.6 M524.5,679.0 V708.2 M533.5,679.0 V700.9 M542.5,679.0 V697.5 M551.5,679.0 V690.9 M560.5,679.0 V683.4 M713.5,679.0 V680.0 M722.5,679.0 V682.6 M731.5,679.0 V681.5 M740.5,679.0 V680.7 M749.5,679.0 V686.6 M758.5,679.0 V692.4 M767.5,679.0 V694.1 M776.5,679.0 V695.6 M785.5,679.0 V704.5 M794.5,679.0 V704.4 M803.5,679.0 V700.9 M812.5,679.0 V696.6 M821.5,679.0 V691.0 M830.5,679.0 V690.0 M839.5,679.0 V685.9 M848.5,679.0 V686.1 M857.5,679.0 V683.7 M866.5,679.0 V682.9 M875.5,679.0 V681.1 M884.5,679.0 V680.2 M893.5,679.0 V680.1 M902.5,679.0 V685.1 M911.5,679.0 V688.8 M920.5,679.0 V689.3 M929.5,679.0 V686.9 M938.5,679.0 V683.3 M947.5,679.0 V680.2 M1118.5,679.0 V680.0 M1127.5,679.0 V683.4 M1136.5,679.0 V687.8 M1145.5,679.0 V690.7 M1154.5,679.0 V692.3 M1163.5,679.0 V691.7 M1172.5,679.0 V692.7 M1181.5,679.0 V692.3 M1190.5,679.0 V688.3 M1199.5,679.0 V683.7 M1208.5,679.0 V682.2 M1217.5,679.0 V680.4 M1226.5,679.0 V680.0 M1343.5,679.0 V680.7 M1352.5,679.0 V680.9 M1361.5,679.0 V680.0 M1496.5,679.0 V680.3 M1505.5,679.0 V682.1 M1514.5,679.0 V683.5 M1523.5,679.0 V684.7 M1532.5,679.0 V687.7 M1541.5,679.0 V687.8 M1550.5,679.0 V690.3 M1559.5,679.0 V690.9" stroke="#00ffff" fill="none"/>
<path d="M83.5,670.5 L92.5,668.4 L101.5,666.6 L110.5,665.1 L119.5,663.9 L128.5,662.9 L137.5,661.7 L146.5,660.3 L155.5,658.7 L164.5,657.1 L173.5,655.7 L182.5,654.2 L191.5,652.3 L200.5,650.3 L209.5,648.3 L218.5,646.3 L227.5,644.1 L236.5,641.6 L245.5,639.1 L254.5,637.8 L263.5,637.8 L272.5,638.3 L281.5,638.9 L290.5,640.0 L299.5,641.5 L308.5,643.2 L317.5,644.3 L326.5,644.9 L335.5,645.1 L344.5,644.8 L353.5,645.1 L362.5,645.7 L371.5,647.1 L380.5,648.8 L389.5,650.4 L398.5,651.6 L407.5,652.1 L416.5,652.3 L425.5,652.1 L434.5,651.5 L443.5,651.2 L452.5,653.4 L461.5,657.6 L470.5,663.5 L479.5,670.4 L488.5,677.5 L497.5,684.2 L506.5,689.9 L515.5,694.8 L524.5,698.4 L533.5,701.2 L542.5,703.5 L551.5,704.9 L560.5,705.5 L569.5,705.2 L578.5,704.2 L587.5,702.6 L596.5,700.8 L605.5,699.4 L614.5,697.6 L623.5,695.5 L632.5,693.2 L641.5,690.6 L650.5,687.5 L659.5,684.7 L668.5,682.0 L677.5,679.6 L686.5,677.8 L695.5,676.7 L704.5,676.2 L713.5,676.2 L722.5,676.7 L731.5,677.0 L740.5,677.2 L749.5,678.2 L758.5,679.9 L767.5,681.7 L776.5,683.8 L785.5,687.0 L794.5,690.2 L803.5,692.9 L812.5,695.1 L821.5,696.6 L830.5,698.0 L839.5,698.9 L848.5,699.8 L857.5,700.3 L866.5,700.8 L875.5,701.1 L884.5,701.2 L893.5,701.4 L902.5,702.1 L911.5,703.4 L920.5,704.7 L929.5,705.6 L938.5,706.2 L947.5,706.3 L956.5,705.9 L965.5,704.8 L974.5,703.0 L983.5,701.0 L992.5,698.7 L1001.5,696.3 L1010.5,693.8 L1019.5,691.4 L1028.5,689.3 L1037.5,687.5 L1046.5,685.7 L1055.5,684.1 L1064.5,682.4 L1073.5,680.8 L1082.5,679.4 L1091.5,678.4 L1100.5,677.6 L1109.5,677.2 L1118.5,677.3 L1127.5,677.8 L1136.5,678.9 L1145.5,680.4 L1154.5,682.0 L1163.5,683.6 L1172.5,685.3 L1181.5,687.0 L1190.5,688.1 L1199.5,688.7 L1208.5,689.1 L1217.5,689.3 L1226.5,689.4 L1235.5,689.2 L1244.5,688.7 L1253.5,688.1 L1262.5,687.5 L1271.5,687.0 L1280.5,686.6 L1289.5,686.3 L1298.5,685.8 L1307.5,685.5 L1316.5,685.2 L1325.5,684.8 L1334.5,684.7 L1343.5,684.9 L1352.5,685.2 L1361.5,685.3 L1370.5,685.1 L1379.5,684.5 L1388.5,683.6 L1397.5,682.5 L1406.5,681.3 L1415.5,679.9 L1424.5,678.8 L1433.5,677.7 L1442.5,676.7 L1451.5,675.9 L1460.5,675.3 L1469.5,675.0 L1478.5,674.7 L1487.5,674.7 L1496.5,674.9 L1505.5,675.3 L1514.5,675.8 L1523.5,676.5 L1532.5,677.6 L1541.5,678.7 L1550.5,680.1 L1559.5,681.6" stroke="#ffff00" fill="none" stroke-width="1.25"/>
<path d="M83.5,661.3 L92.5,659.8 L101.5,659.4 L110.5,659.1 L119.5,659.3 L128.5,658.5 L137.5,656.9 L146.5,654.6 L155.5,652.4 L164.5,651.0 L173.5,650.1 L182.5,648.2 L191.5,644.3 L200.5,642.3 L209.5,640.6 L218.5,637.9 L227.5,635.5 L236.5,631.4 L245.5,629.1 L254.5,632.8 L263.5,638.0 L272.5,640.3 L281.5,641.0 L290.5,644.6 L299.5,647.6 L308.5,649.8 L317.5,649.0 L326.5,647.4 L335.5,645.6 L344.5,643.8 L353.5,646.3 L362.5,648.0 L371.5,652.6 L380.5,655.7 L389.5,656.9 L398.5,656.2 L407.5,654.3 L416.5,652.9 L425.5,651.2 L434.5,649.5 L443.5,650.1 L452.5,661.9 L461.5,674.4 L470.5,687.3 L479.5,697.7 L488.5,705.9 L497.5,711.3 L506.5,712.7 L515.5,714.0 L524.5,713.0 L533.5,712.1 L542.5,712.7 L551.5,710.9 L560.5,707.7 L569.5,704.2 L578.5,700.1 L587.5,696.0 L596.5,693.9 L605.5,693.4 L614.5,690.4 L623.5,687.3 L632.5,683.9 L641.5,680.1 L650.5,675.4 L659.5,673.1 L668.5,671.1 L677.5,670.4 L686.5,670.5 L695.5,672.2 L704.5,674.4 L713.5,676.3 L722.5,678.5 L731.5,678.3 L740.5,678.1 L749.5,682.0 L758.5,686.5 L767.5,689.3 L776.5,692.1 L785.5,699.8 L794.5,702.9 L803.5,703.9 L812.5,703.9 L821.5,702.6 L830.5,703.5 L839.5,702.3 L848.5,703.3 L857.5,702.7 L866.5,702.8 L875.5,702.1 L884.5,701.8 L893.5,701.9 L902.5,705.2 L911.5,708.2 L920.5,709.8 L929.5,709.6 L938.5,708.3 L947.5,706.9 L956.5,704.1 L965.5,700.4 L974.5,696.0 L983.5,692.9 L992.5,689.3 L1001.5,686.7 L1010.5,683.9 L1019.5,681.7 L1028.5,680.9 L1037.5,680.2 L1046.5,678.9 L1055.5,677.3 L1064.5,675.6 L1073.5,674.4 L1082.5,673.8 L1091.5,674.5 L1100.5,674.3 L1109.5,675.6 L1118.5,677.6 L1127.5,680.0 L1136.5,683.3 L1145.5,686.2 L1154.5,688.7 L1163.5,690.0 L1172.5,692.2 L1181.5,693.7 L1190.5,692.8 L1199.5,691.1 L1208.5,690.8 L1217.5,690.0 L1226.5,689.7 L1235.5,688.4 L1244.5,686.9 L1253.5,685.3 L1262.5,685.1 L1271.5,685.2 L1280.5,685.2 L1289.5,684.8 L1298.5,684.1 L1307.5,684.4 L1316.5,683.7 L1325.5,683.6 L1334.5,684.3 L1343.5,685.8 L1352.5,686.1 L1361.5,685.5 L1370.5,684.3 L1379.5,682.2 L1388.5,680.2 L1397.5,678.0 L1406.5,676.5 L1415.5,674.5 L1424.5,674.4 L1433.5,673.4 L1442.5,672.8 L1451.5,672.4 L1460.5,673.0 L1469.5,673.7 L1478.5,673.7 L1487.5,674.7 L1496.5,675.5 L1505.5,676.8 L1514.5,678.1 L1523.5,679.4 L1532.5,682.0 L1541.5,683.1 L1550.5,685.8 L1559.5,687.6" stroke="#ffffff" fill="none" stroke-width="1.2"/>
<path d="M83.5,770.0 L92.5,777.0 L101.5,782.8 L110.5,784.8 L119.5,790.9 L128.5,787.7 L137.5,782.2 L146.5,779.6 L155.5,776.5 L164.5,778.7 L173.5,779.5 L182.5,776.6 L191.5,766.1 L200.5,768.4 L209.5,773.4 L218.5,771.2 L227.5,768.9 L236.5,764.8 L245.5,764.5 L254.5,787.9 L263.5,803.2 L272.5,796.8 L281.5,794.6 L290.5,799.8 L299.5,805.0 L308.5,800.9 L317.5,789.9 L326.5,780.9 L335.5,778.4 L344.5,776.4 L353.5,795.0 L362.5,798.1 L371.5,815.2 L380.5,815.3 L389.5,805.8 L398.5,790.9 L407.5,785.8 L416.5,776.2 L425.5,778.4 L434.5,772.2 L443.5,784.0 L452.5,846.0 L461.5,860.6 L470.5,863.2 L479.5,857.1 L488.5,850.4 L497.5,838.9 L506.5,831.4 L515.5,826.7 L524.5,822.9 L533.5,820.6 L542.5,821.7 L551.5,819.4 L560.5,814.8 L569.5,811.8 L578.5,809.3 L587.5,805.1 L596.5,807.3 L605.5,808.1 L614.5,800.7 L623.5,787.6 L632.5,782.6 L641.5,774.1 L650.5,770.0 L659.5,775.1 L668.5,780.7 L677.5,780.7 L686.5,790.5 L695.5,797.4 L704.5,808.8 L713.5,811.6 L722.5,817.7 L731.5,806.9 L740.5,804.6 L749.5,831.9 L758.5,855.9 L767.5,844.5 L776.5,843.2 L785.5,861.1 L794.5,853.6 L803.5,838.2 L812.5,830.1 L821.5,825.2 L830.5,826.8 L839.5,824.0 L848.5,826.6 L857.5,825.1 L866.5,825.3 L875.5,824.4 L884.5,822.8 L893.5,825.1 L902.5,840.7 L911.5,848.6 L920.5,849.2 L929.5,839.5 L938.5,828.7 L947.5,826.9 L956.5,815.3 L965.5,802.0 L974.5,789.9 L983.5,794.7 L992.5,788.6 L1001.5,791.1 L1010.5,785.1 L1019.5,785.1 L1028.5,788.1 L1037.5,792.3 L1046.5,790.8 L1055.5,783.9 L1064.5,784.1 L1073.5,784.8 L1082.5,786.7 L1091.5,795.2 L1100.5,793.5 L1109.5,803.3 L1118.5,817.9 L1127.5,828.1 L1136.5,854.7 L1145.5,865.3 L1154.5,853.8 L1163.5,843.1 L1172.5,846.7 L1181.5,840.2 L1190.5,826.1 L1199.5,819.0 L1208.5,819.3 L1217.5,819.4 L1226.5,817.4 L1235.5,815.7 L1244.5,811.7 L1253.5,804.4 L1262.5,808.4 L1271.5,815.7 L1280.5,816.0 L1289.5,810.4 L1298.5,803.1 L1307.5,804.3 L1316.5,796.6 L1325.5,798.1 L1334.5,823.4 L1343.5,845.2 L1352.5,834.8 L1361.5,824.2 L1370.5,797.5 L1379.5,770.7 L1388.5,757.2 L1397.5,755.9 L1406.5,765.7 L1415.5,766.3 L1424.5,777.8 L1433.5,781.0 L1442.5,780.0 L1451.5,782.2 L1460.5,793.8 L1469.5,800.7 L1478.5,794.5 L1487.5,801.6 L1496.5,809.4 L1505.5,814.5 L1514.5,818.9 L1523.5,823.8 L1532.5,843.3 L1541.5,843.7 L1550.5,852.6 L1559.5,850.3" stroke="#ffffff" fill="none" stroke-width="1.2"/>
<path d="M83.5,914.8 L92.5,921.3 L101.5,925.0 L110.5,924.5 L119.5,926.0 L128.5,921.7 L137.5,917.8 L146.5,914.1 L155.5,912.7 L164.5,912.8 L173.5,912.4 L182.5,909.1 L191.5,904.4 L200.5,909.1 L209.5,908.1 L218.5,905.4 L227.5,904.3 L236.5,901.2 L245.5,903.7 L254.5,929.6 L263.5,936.3 L272.5,931.3 L281.5,928.3 L290.5,937.2 L299.5,936.8 L308.5,935.6 L317.5,929.8 L326.5,927.5 L335.5,925.8 L344.5,924.6 L353.5,936.3 L362.5,935.1 L371.5,943.2 L380.5,941.8 L389.5,938.4 L398.5,934.9 L407.5,931.8 L416.5,931.6 L425.5,929.9 L434.5,928.8 L443.5,933.8 L452.5,958.7 L461.5,963.2 L470.5,967.2 L479.5,967.7 L488.5,968.2 L497.5,966.2 L506.5,960.7 L515.5,961.6 L524.5,957.9 L533.5,958.4 L542.5,961.2 L551.5,956.9 L560.5,953.9 L569.5,952.3 L578.5,950.1 L587.5,948.7 L596.5,951.6 L605.5,954.2 L614.5,948.7 L623.5,947.5 L632.5,945.8 L641.5,943.5 L650.5,940.1 L659.5,943.5 L668.5,943.0 L677.5,944.7 L686.5,946.2 L695.5,950.2 L704.5,951.9 L713.5,952.2 L722.5,953.9 L731.5,948.6 L740.5,948.7 L749.5,958.2 L758.5,961.3 L767.5,959.3 L776.5,960.8 L785.5,970.5 L794.5,963.5 L803.5,960.5 L812.5,959.4 L821.5,957.0 L830.5,960.9 L839.5,956.9 L848.5,960.9 L857.5,958.3 L866.5,959.8 L875.5,958.6 L884.5,959.6 L893.5,960.7 L902.5,966.9 L911.5,968.2 L920.5,966.8 L929.5,963.6 L938.5,961.4 L947.5,961.2 L956.5,957.2 L965.5,953.8 L974.5,950.6 L983.5,951.8 L992.5,949.4 L1001.5,950.0 L1010.5,948.4 L1019.5,948.2 L1028.5,951.3 L1037.5,951.0 L1046.5,948.9 L1055.5,946.9 L1064.5,945.7 L1073.5,945.6 L1082.5,947.0 L1091.5,950.8 L1100.5,948.2 L1109.5,952.8 L1118.5,956.0 L1127.5,958.3 L1136.5,962.5 L1145.5,963.4 L1154.5,964.2 L1163.5,961.7 L1172.5,965.5 L1181.5,965.2 L1190.5,957.1 L1199.5,953.8 L1208.5,957.5 L1217.5,956.0 L1226.5,957.4 L1235.5,953.6 L1244.5,952.1 L1253.5,950.9 L1262.5,954.7 L1271.5,956.2 L1280.5,955.7 L1289.5,954.9 L1298.5,952.8 L1307.5,956.5 L1316.5,952.6 L1325.5,954.6 L1334.5,957.9 L1343.5,961.4 L1352.5,957.8 L1361.5,954.1 L1370.5,950.9 L1379.5,947.0 L1388.5,945.2 L1397.5,943.0 L1406.5,943.8 L1415.5,940.7 L1424.5,947.0 L1433.5,943.4 L1442.5,943.7 L1451.5,943.9 L1460.5,948.1 L1469.5,948.6 L1478.5,945.8 L1487.5,950.3 L1496.5,950.6 L1505.5,953.1 L1514.5,954.4 L1523.5,955.8 L1532.5,962.6 L1541.5,957.6 L1550.5,964.5 L1559.5,963.3" stroke="#ff40c0" fill="none" stroke-width="1.6"/>
<path d="M17,81.5 H1675 M17,488.5 H1675 M17,610.5 H1675 M17,739.5 H1675 M17,867.5 H1675 M17,1016.5 H1675 M78.500,81 V1032 M1674.500,62 V1032" stroke="#d01010" stroke-width="1" fill="none"/><rect x="18" y="868" width="60" height="148" fill="none" stroke="#d41414" stroke-width="2"/>
</svg>
<div class="t" style="left:19px;top:65px;color:#fff;font-size:12px">螺纹<span style="font-size:11.4px;letter-spacing:0.1px">2410(010610)&lt;</span>周线<span style="font-size:11.4px">&gt;</span></div>
<div class="t" style="left:1450px;top:64px;color:#80c0ff;text-decoration:underline;text-underline-offset:2px;font-size:12px">商品叠加</div>
<div class="t" style="left:1510px;top:64px;color:#80c0ff;text-decoration:underline;text-underline-offset:2px;font-size:12px">查看期权</div>
<div class="t" style="left:1578px;top:64px;color:#80c0ff;text-decoration:underline;text-underline-offset:2px;font-size:12px">周期</div>
<svg class="a" style="left:1622px;top:63px" width="52" height="16"><g stroke="#80c0ff" fill="none" stroke-width="1"><rect x="0.500" y="0.500" width="16" height="14"/><rect x="18" y="0.500" width="16" height="14"/><rect x="35.500" y="0.500" width="15" height="14"/><path d="M13,5.500 H7 V3 L3,7.500 L7,12 V9.500 H13 Z"/><path d="M21,5.500 H27 V3 L31,7.500 L27,12 V9.500 H21 Z"/><path d="M35.500,7.500 H46 M46,0.500 V14.500"/><path d="M48.500,3 V12" stroke-dasharray="1,1"/></g></svg>
<div class="t" style="left:80.0px;top:85.0px;color:#c0c0c0;font-size:12px;letter-spacing:-1.00px">K</div>
<div class="t" style="left:96.0px;top:85.0px;color:#fff;font-size:12px;letter-spacing:0.04px">MA5:3560</div>
<div class="t" style="left:156.0px;top:85.0px;color:#ffff00;font-size:12px;letter-spacing:0.08px">MA13:3741</div>
<div class="t" style="left:223.0px;top:85.0px;color:#ff00ff;font-size:12px;letter-spacing:0.08px">MA21:3818</div>
<div class="t" style="left:290.0px;top:85.0px;color:#00ff00;font-size:12px;letter-spacing:0.08px">MA34:3768</div>
<div class="t" style="left:357.0px;top:85.0px;color:#8080ff;font-size:12px;letter-spacing:0.08px">MA55:3782</div>
<div class="t" style="left:424.0px;top:85.0px;color:#ff8000;font-size:12px;letter-spacing:0.08px">MA89:3834</div>
<div class="t" style="left:491.0px;top:85.0px;color:#2a98e8;font-size:12px;letter-spacing:0.11px">MA144:4230</div>
<div class="t" style="left:565.0px;top:85.0px;color:#e82848;font-size:12px;letter-spacing:0.11px">MA233:4080</div>
<div class="t" style="left:643.0px;top:85.0px;color:#c0c0c0;font-size:12px;letter-spacing:0.05px">BOLL(26,2)</div>
<div class="t" style="left:711.4px;top:85.0px;color:#fff;font-size:12px;letter-spacing:-0.02px">MID:3783</div>
<div class="t" style="left:768.5px;top:85.0px;color:#ffff00;font-size:12px;letter-spacing:-0.51px">UPPER:4130</div>
<div class="t" style="left:840.5px;top:85.0px;color:#ff00ff;font-size:12px;letter-spacing:-0.23px">LOWER:3435</div>
<div class="t" style="left:921.0px;top:85.0px;color:#c0c0c0;font-size:12px;letter-spacing:0.21px">SAR(10,2,20)</div>
<div class="t" style="left:1001.4px;top:85.0px;color:#ff2020;font-size:12px;letter-spacing:-0.71px">SARUP:0</div>
<div class="t" style="left:1053.3px;top:85.0px;color:#00ff00;font-size:12px;letter-spacing:-0.20px">SARDOWN:3780</div>
<div class="t" style="left:1152.3px;top:85.0px;color:#c0c0c0;font-size:12px;letter-spacing:-0.12px">SSLO 3470</div>
<div class="t" style="left:81.0px;top:492.0px;color:#c0c0c0;font-size:12px;letter-spacing:0.17px">VOL(5,21)</div>
<div class="t" style="left:143.3px;top:492.0px;color:#c0c0c0;font-size:12px;letter-spacing:-0.00px">VOLUME:4720191.0000</div>
<div class="t" style="left:279.3px;top:492.0px;color:#fff;font-size:12px;letter-spacing:0.16px">MAVOL1:2144520.8000</div>
<div class="t" style="left:415.0px;top:492.0px;color:#ffff00;font-size:12px;letter-spacing:0.18px">MAVOL2:585465.7619</div>
<div class="t" style="left:81.0px;top:615.0px;color:#c0c0c0;font-size:12px;letter-spacing:0.05px">MACD(12,26,9)</div>
<div class="t" style="left:170.0px;top:615.0px;color:#fff;font-size:12px;letter-spacing:-0.01px">DIFF:-72.9605</div>
<div class="t" style="left:252.3px;top:615.0px;color:#ffff00;font-size:12px;letter-spacing:0.06px">DEA:-22.6332</div>
<div class="t" style="left:333.3px;top:615.0px;color:#c0c0c0;font-size:12px;letter-spacing:-0.08px">MACD:-100.6547</div>
<div class="t" style="left:80.0px;top:743.0px;color:#c0c0c0;font-size:12px;letter-spacing:-0.00px">CCI(21)</div>
<div class="t" style="left:127.0px;top:743.0px;color:#fff;font-size:12px;letter-spacing:0.33px">-185.8718</div>
<div class="t" style="left:80.0px;top:871.0px;color:#c0c0c0;font-size:12px;letter-spacing:0.30px">RSI(21,21,21)</div>
<div class="t" style="left:163.0px;top:871.0px;color:#fff;font-size:12px;letter-spacing:0.10px">RSI1:39.1772</div>
<div class="t" style="left:242.0px;top:871.0px;color:#ffff00;font-size:12px;letter-spacing:0.12px">RSI2:39.1772</div>
<div class="t" style="left:320.8px;top:871.0px;color:#ff00ff;font-size:12px;letter-spacing:0.07px">RSI3:39.1772</div>
<div class="ax" style="left:13.5px;top:372px">4000</div>
<div class="ax" style="left:13.5px;top:427px">3500</div>
<div class="ax" style="left:13.5px;top:547px">900万</div>
<div class="ax" style="left:13.5px;top:626px">400</div>
<div class="ax" style="left:13.5px;top:673px">0</div>
<div class="ax" style="left:13.5px;top:777px">100</div>
<div class="ax" style="left:13.5px;top:801px">0</div>
<div class="ax" style="left:13.5px;top:824px">-100</div>
<div class="ax" style="left:13.5px;top:878px">100</div>
<div class="ax" style="left:13.5px;top:904px">80</div>
<div class="ax" style="left:13.5px;top:943px">50</div>
<div class="ax" style="left:13.5px;top:982px">20</div>
<div class="ax" style="left:13.5px;top:998px">0</div>
<div class="a" style="left:78px;top:326px;width:37px;height:16px;border:1px solid #d0d0d0;background:#000;color:#c4c4c4;font-size:12.5px;line-height:14px;text-align:center">4325</div>
<div class="a" style="left:78px;top:357px;width:37px;height:17px;border:1px solid #d0d0d0;background:#000;color:#c4c4c4;font-size:12.5px;line-height:15px;text-align:center">4043</div>
<div class="a" style="left:78px;top:419px;width:37px;height:16px;border:1px solid #d0d0d0;background:#000;color:#c4c4c4;font-size:12.5px;line-height:14px;text-align:center">3479</div>
<div class="a" style="left:78px;top:435px;width:37px;height:13px;border:1px solid #d0d0d0;background:#000;color:#c4c4c4;font-size:12.5px;line-height:11px;text-align:center">3360</div>
<div class="a" style="left:78px;top:448px;width:37px;height:13px;border:1px solid #d0d0d0;background:#000;color:#c4c4c4;font-size:12.5px;line-height:11px;text-align:center">3251</div>
<div class="t" style="left:204px;top:129px;color:#f0f0f0;font-weight:bold;font-size:12.4px;letter-spacing:0.1px">6208</div>
<svg class="a" style="left:232px;top:130px" width="14" height="11"><path d="M2,5.500 H12 M9.500,3.300 L12,5.500 L9.500,7.700" stroke="#dcdcdc" fill="none"/></svg>
<div class="t" style="left:880px;top:454px;color:#e0e0e0;font-size:12.4px;font-weight:bold">3253</div>
<svg class="a" style="left:906px;top:455px" width="14" height="11"><path d="M1,5.500 H11 M8.500,3.300 L11,5.500 L8.500,7.700" stroke="#dcdcdc" fill="none"/></svg>
<div class="t" style="left:50px;top:1017px;color:#fff;font-size:12.5px">周线</div>
<div class="t" style="left:80px;top:1017px;color:#e8e8e8;font-size:10.7px">202101</div>
<div class="t" style="left:149px;top:1017px;color:#e8e8e8;font-size:10.7px">03</div>
<div class="t" style="left:229px;top:1017px;color:#e8e8e8;font-size:10.7px">05</div>
<div class="t" style="left:301px;top:1017px;color:#e8e8e8;font-size:10.7px">07</div>
<div class="t" style="left:383px;top:1017px;color:#e8e8e8;font-size:10.7px">09</div>
<div class="t" style="left:464px;top:1017px;color:#e8e8e8;font-size:10.7px">11</div>
<div class="t" style="left:532px;top:1017px;color:#e8e8e8;font-size:10.7px">202201</div>
<div class="t" style="left:608px;top:1017px;color:#e8e8e8;font-size:10.7px">03</div>
<div class="t" style="left:688px;top:1017px;color:#e8e8e8;font-size:10.7px">05</div>
<div class="t" style="left:760px;top:1017px;color:#e8e8e8;font-size:10.7px">07</div>
<div class="t" style="left:841px;top:1017px;color:#e8e8e8;font-size:10.7px">09</div>
<div class="t" style="left:913px;top:1017px;color:#e8e8e8;font-size:10.7px">11</div>
<div class="t" style="left:982px;top:1017px;color:#e8e8e8;font-size:10.7px">202301</div>
<div class="t" style="left:1058px;top:1017px;color:#e8e8e8;font-size:10.7px">03</div>
<div class="t" style="left:1139px;top:1017px;color:#e8e8e8;font-size:10.7px">05</div>
<div class="t" style="left:1219px;top:1017px;color:#e8e8e8;font-size:10.7px">07</div>
<div class="t" style="left:1291px;top:1017px;color:#e8e8e8;font-size:10.7px">09</div>
<div class="t" style="left:1363px;top:1017px;color:#e8e8e8;font-size:10.7px">11</div>
<div class="t" style="left:1432px;top:1017px;color:#e8e8e8;font-size:10.7px">202401</div>
<div class="t" style="left:1508px;top:1017px;color:#e8e8e8;font-size:10.7px">03</div>
<div class="a" style="left:18px;top:98px;width:60px;height:240px;border:1px solid #e8e8e8;background:#000"></div>
<svg class="a" style="left:18px;top:98px" width="60" height="240"><path d="M18,9.500 H42" stroke="#fff" stroke-dasharray="3,1"/>
<path d="M35,36.5 H59" stroke="#ff3030" stroke-dasharray="3,1"/>
<path d="M35,64.5 H59" stroke="#ff3030" stroke-dasharray="3,1"/>
<path d="M35,92.5 H59" stroke="#00e000" stroke-dasharray="3,1"/>
<path d="M35,120.5 H59" stroke="#00e000" stroke-dasharray="3,1"/>
<path d="M35,148.5 H59" stroke="#ffff00" stroke-dasharray="3,1"/>
<path d="M35,176.5 H59" stroke="#ffff00" stroke-dasharray="3,1"/>
<path d="M35,204.5 H59" stroke="#00e000" stroke-dasharray="3,1"/>
<path d="M35,232.5 H59" stroke="#00e000" stroke-dasharray="3,1"/>
</svg>
<div class="t" style="left:18px;width:60px;text-align:center;top:114px;font-size:12px;font-weight:300;color:#fff;letter-spacing:0">开&#8195;盘</div>
<div class="t" style="left:18px;width:60px;text-align:center;top:142px;font-size:12px;font-weight:300;color:#fff;letter-spacing:0">最&#8195;高</div>
<div class="t" style="left:18px;width:60px;text-align:center;top:170px;font-size:12px;font-weight:300;color:#fff;letter-spacing:0">最&#8195;低</div>
<div class="t" style="left:18px;width:60px;text-align:center;top:198px;font-size:12px;font-weight:300;color:#fff;letter-spacing:0">收&#8195;盘</div>
<div class="t" style="left:18px;width:60px;text-align:center;top:226px;font-size:12px;font-weight:300;color:#fff;letter-spacing:2px">成交量</div>
<div class="t" style="left:18px;width:60px;text-align:center;top:254px;font-size:12px;font-weight:300;color:#fff;letter-spacing:0">持&#8195;仓</div>
<div class="t" style="left:18px;width:60px;text-align:center;top:282px;font-size:12px;font-weight:300;color:#fff;letter-spacing:0">涨&#8195;跌</div>
<div class="t" style="left:18px;width:60px;text-align:center;top:310px;font-size:12px;font-weight:300;color:#fff;letter-spacing:0">幅&#8195;度</div>
<svg class="a" style="left:1675px;top:62px" width="244" height="982"><path d="M0,25.500 H240 M0,30.500 H240 M0,141.500 H240 M0,252.500 H240 M0,412.500 H240" stroke="#d01010" fill="none"/><rect x="0" y="26" width="196" height="4" fill="#ff3838"/><rect x="196" y="26" width="43" height="4" fill="#00f000"/><g stroke="#80b8ff" fill="none"><rect x="224.500" y="3.500" width="13" height="11"/><rect x="226.500" y="6.500" width="9" height="6"/></g><path d="M-0.500,967 Q-0.500,969.500 2,969.500 H34 Q36.500,969.500 36.500,967 V957 Q36.500,954.500 39,954.500 H240 M72.500,956 V968" stroke="#d01010" fill="none"/></svg>
<div class="a" style="left:1676px;top:62px;width:239px;text-align:center;padding-right:16px;font-family:'Liberation Serif','Noto Serif CJK SC',serif;font-weight:bold;font-size:19px;line-height:25px;color:#ffff00;letter-spacing:0.7px">螺纹2410(rb2410)</div>
<div class="rp lab" style="left:1680px;top:93.5px">卖五</div>
<div class="rp num g" style="left:1707px;width:80px;top:93.5px;font-size:14px">3467</div>
<div class="rp num y" style="left:1802px;top:93.5px;font-size:14px;text-align:left">173</div>
<div class="rp lab" style="left:1680px;top:113.5px">卖四</div>
<div class="rp num g" style="left:1707px;width:80px;top:113.5px;font-size:14px">3466</div>
<div class="rp num y" style="left:1802px;top:113.5px;font-size:14px;text-align:left">262</div>
<div class="rp lab" style="left:1680px;top:133.5px">卖三</div>
<div class="rp num g" style="left:1707px;width:80px;top:133.5px;font-size:14px">3465</div>
<div class="rp num y" style="left:1802px;top:133.5px;font-size:14px;text-align:left">63</div>
<div class="rp lab" style="left:1680px;top:153.5px">卖二</div>
<div class="rp num g" style="left:1707px;width:80px;top:153.5px;font-size:14px">3464</div>
<div class="rp num y" style="left:1802px;top:153.5px;font-size:14px;text-align:left">166</div>
<div class="rp lab" style="left:1680px;top:178.0px">卖一</div>
<div class="rp num g" style="left:1707px;width:80px;top:178.0px;font-size:21px">3463</div>
<div class="rp num y" style="left:1802px;top:178.0px;font-size:21px;text-align:left">67</div>
<div class="rp lab" style="left:1680px;top:209.0px">买一</div>
<div class="rp num g" style="left:1707px;width:80px;top:209.0px;font-size:21px">3462</div>
<div class="rp num y" style="left:1802px;top:209.0px;font-size:21px;text-align:left">67</div>
<div class="rp lab" style="left:1680px;top:234.0px">买二</div>
<div class="rp num g" style="left:1707px;width:80px;top:234.0px;font-size:14px">3461</div>
<div class="rp num y" style="left:1802px;top:234.0px;font-size:14px;text-align:left">1188</div>
<div class="rp lab" style="left:1680px;top:254.0px">买三</div>
<div class="rp num g" style="left:1707px;width:80px;top:254.0px;font-size:14px">3460</div>
<div class="rp num y" style="left:1802px;top:254.0px;font-size:14px;text-align:left">1544</div>
<div class="rp lab" style="left:1680px;top:274.0px">买四</div>
<div class="rp num g" style="left:1707px;width:80px;top:274.0px;font-size:14px">3459</div>
<div class="rp num y" style="left:1802px;top:274.0px;font-size:14px;text-align:left">201</div>
<div class="rp lab" style="left:1680px;top:294.0px">买五</div>
<div class="rp num g" style="left:1707px;width:80px;top:294.0px;font-size:14px">3458</div>
<div class="rp num y" style="left:1802px;top:294.0px;font-size:14px;text-align:left">467</div>
<div class="rp lab" style="left:1680px;top:315px">最新</div>
<div class="rp num g" style="left:1707px;width:80px;top:315px">3463</div>
<div class="rp lab" style="left:1802px;top:315px">结算</div>
<div class="rp num g" style="left:1829px;width:80px;top:315px">3509</div>
<div class="rp lab" style="left:1680px;top:335px">涨跌</div>
<div class="rp num g" style="left:1707px;width:80px;top:335px">-49</div>
<div class="rp lab" style="left:1802px;top:335px">昨结</div>
<div class="rp num w" style="left:1829px;width:80px;top:335px">3512</div>
<div class="rp lab" style="left:1680px;top:355px">幅度</div>
<div class="rp num g" style="left:1707px;width:80px;top:355px">-1.40%</div>
<div class="rp lab" style="left:1802px;top:355px">开盘</div>
<div class="rp num g" style="left:1829px;width:80px;top:355px">3500</div>
<div class="rp lab" style="left:1680px;top:375px">总手</div>
<div class="rp num y" style="left:1707px;width:80px;top:375px">1620584</div>
<div class="rp lab" style="left:1802px;top:375px">最高</div>
<div class="rp num r" style="left:1829px;width:80px;top:375px">3540</div>
<div class="rp lab" style="left:1680px;top:395px">现手</div>
<div class="rp num y" style="left:1707px;width:80px;top:395px">290</div>
<div class="rp lab" style="left:1802px;top:395px">最低</div>
<div class="rp num g" style="left:1829px;width:80px;top:395px">3462</div>
<div class="rp lab" style="left:1680px;top:415px">涨停</div>
<div class="rp num r" style="left:1707px;width:80px;top:415px">3722</div>
<div class="rp lab" style="left:1802px;top:415px">跌停</div>
<div class="rp num g" style="left:1829px;width:80px;top:415px">3301</div>
<div class="rp lab" style="left:1680px;top:435px">持仓</div>
<div class="rp num y" style="left:1707px;width:80px;top:435px">1674662</div>
<div class="rp lab" style="left:1802px;top:435px">仓差</div>
<div class="rp num y" style="left:1829px;width:80px;top:435px">22824</div>
<div class="rp lab" style="left:1680px;top:455px">外盘</div>
<div class="rp num r" style="left:1707px;width:80px;top:455px">800516</div>
<div class="rp lab" style="left:1802px;top:455px">内盘</div>
<div class="rp num g" style="left:1829px;width:80px;top:455px">820068</div>
<div class="rp lab" style="left:1680px;width:40px;top:478px;color:#7a7a7a;text-align:left">北京</div>
<div class="rp lab" style="left:1722px;width:60px;top:478px;color:#7a7a7a;text-align:right">价格</div>
<div class="rp lab" style="left:1789px;width:42px;top:478px;color:#7a7a7a;text-align:left"><span style="display:inline-block;width:12px;font-size:13px">√</span>大单</div>
<div class="rp lab" style="left:1838px;width:40px;top:478px;color:#7a7a7a;text-align:right">仓差</div>
<div class="rp lab" style="left:1887px;width:28px;top:478px;color:#7a7a7a;text-align:left">性质</div>
<div class="rp num w" style="left:1680px;top:499px;text-align:left">14:59</div>
<div class="rp num g" style="left:1722px;width:60px;top:499px">3467</div>
<div class="rp num r" style="left:1770px;width:60px;top:499px">505</div>
<div class="rp num y" style="left:1818px;width:60px;top:499px">-169</div>
<div class="rp lab r" style="left:1887px;top:499px;font-size:13.5px;font-weight:400">空平</div>
<div class="rp" style="left:1697.5px;top:521px;font-size:11.5px;color:#e0e0e0">:14</div>
<div class="rp num g" style="left:1722px;width:60px;top:521px">3466</div>
<div class="rp num r" style="left:1770px;width:60px;top:521px">414</div>
<div class="rp num y" style="left:1818px;width:60px;top:521px">-167</div>
<div class="rp lab r" style="left:1887px;top:521px;font-size:13.5px;font-weight:400">空平</div>
<div class="rp" style="left:1697.5px;top:543px;font-size:11.5px;color:#e0e0e0">:16</div>
<div class="rp num g" style="left:1722px;width:60px;top:543px">3466</div>
<div class="rp num r" style="left:1770px;width:60px;top:543px">317</div>
<div class="rp num y" style="left:1818px;width:60px;top:543px">-167</div>
<div class="rp lab r" style="left:1887px;top:543px;font-size:13.5px;font-weight:400">空平</div>
<div class="rp" style="left:1697.5px;top:565px;font-size:11.5px;color:#e0e0e0">:18</div>
<div class="rp num g" style="left:1722px;width:60px;top:565px">3466</div>
<div class="rp num r" style="left:1770px;width:60px;top:565px">432</div>
<div class="rp num y" style="left:1818px;width:60px;top:565px">-125</div>
<div class="rp lab r" style="left:1887px;top:565px;font-size:13.5px;font-weight:400">空平</div>
<div class="rp" style="left:1697.5px;top:587px;font-size:11.5px;color:#e0e0e0">:19</div>
<div class="rp num g" style="left:1722px;width:60px;top:587px">3466</div>
<div class="rp num r" style="left:1770px;width:60px;top:587px">350</div>
<div class="rp num y" style="left:1818px;width:60px;top:587px">+24</div>
<div class="rp lab r" style="left:1887px;top:587px;font-size:13.5px;font-weight:400">多开</div>
<div class="rp" style="left:1697.5px;top:609px;font-size:11.5px;color:#e0e0e0">:22</div>
<div class="rp num g" style="left:1722px;width:60px;top:609px">3466</div>
<div class="rp num r" style="left:1770px;width:60px;top:609px">428</div>
<div class="rp num y" style="left:1818px;width:60px;top:609px">-358</div>
<div class="rp lab r" style="left:1887px;top:609px;font-size:13.5px;font-weight:400">空平</div>
<div class="rp" style="left:1697.5px;top:631px;font-size:11.5px;color:#e0e0e0">:28</div>
<div class="rp num g" style="left:1722px;width:60px;top:631px">3464</div>
<div class="rp num r" style="left:1770px;width:60px;top:631px">467</div>
<div class="rp num y" style="left:1818px;width:60px;top:631px">-236</div>
<div class="rp lab r" style="left:1887px;top:631px;font-size:13.5px;font-weight:400">空平</div>
<div class="rp" style="left:1697.5px;top:653px;font-size:11.5px;color:#e0e0e0">:29</div>
<div class="rp num g" style="left:1722px;width:60px;top:653px">3464</div>
<div class="rp num r" style="left:1770px;width:60px;top:653px">367</div>
<div class="rp num y" style="left:1818px;width:60px;top:653px">-108</div>
<div class="rp lab r" style="left:1887px;top:653px;font-size:13.5px;font-weight:400">空平</div>
<div class="rp" style="left:1697.5px;top:675px;font-size:11.5px;color:#e0e0e0">:30</div>
<div class="rp num g" style="left:1722px;width:60px;top:675px">3464</div>
<div class="rp num r" style="left:1770px;width:60px;top:675px">483</div>
<div class="rp num y" style="left:1818px;width:60px;top:675px">-144</div>
<div class="rp lab r" style="left:1887px;top:675px;font-size:13.5px;font-weight:400">空平</div>
<div class="rp" style="left:1697.5px;top:697px;font-size:11.5px;color:#e0e0e0">:34</div>
<div class="rp num g" style="left:1722px;width:60px;top:697px">3463</div>
<div class="rp num g" style="left:1770px;width:60px;top:697px">526</div>
<div class="rp num y" style="left:1818px;width:60px;top:697px">+385</div>
<div class="rp lab g" style="left:1887px;top:697px;font-size:13.5px;font-weight:400">空开</div>
<div class="rp" style="left:1697.5px;top:719px;font-size:11.5px;color:#e0e0e0">:41</div>
<div class="rp num g" style="left:1722px;width:60px;top:719px">3463</div>
<div class="rp num g" style="left:1770px;width:60px;top:719px">330</div>
<div class="rp num y" style="left:1818px;width:60px;top:719px">-84</div>
<div class="rp lab g" style="left:1887px;top:719px;font-size:13.5px;font-weight:400">多平</div>
<div class="rp" style="left:1697.5px;top:741px;font-size:11.5px;color:#e0e0e0">:41</div>
<div class="rp num g" style="left:1722px;width:60px;top:741px">3463</div>
<div class="rp num g" style="left:1770px;width:60px;top:741px">417</div>
<div class="rp num y" style="left:1818px;width:60px;top:741px">-109</div>
<div class="rp lab g" style="left:1887px;top:741px;font-size:13.5px;font-weight:400">多平</div>
<div class="rp" style="left:1697.5px;top:763px;font-size:11.5px;color:#e0e0e0">:45</div>
<div class="rp num g" style="left:1722px;width:60px;top:763px">3463</div>
<div class="rp num g" style="left:1770px;width:60px;top:763px">481</div>
<div class="rp num y" style="left:1818px;width:60px;top:763px">-274</div>
<div class="rp lab g" style="left:1887px;top:763px;font-size:13.5px;font-weight:400">多平</div>
<div class="rp" style="left:1697.5px;top:785px;font-size:11.5px;color:#e0e0e0">:47</div>
<div class="rp num g" style="left:1722px;width:60px;top:785px">3463</div>
<div class="rp num r" style="left:1770px;width:60px;top:785px">354</div>
<div class="rp num y" style="left:1818px;width:60px;top:785px">+34</div>
<div class="rp lab r" style="left:1887px;top:785px;font-size:13.5px;font-weight:400">多开</div>
<div class="rp" style="left:1697.5px;top:807px;font-size:11.5px;color:#e0e0e0">:48</div>
<div class="rp num g" style="left:1722px;width:60px;top:807px">3463</div>
<div class="rp num r" style="left:1770px;width:60px;top:807px">435</div>
<div class="rp num y" style="left:1818px;width:60px;top:807px">-300</div>
<div class="rp lab r" style="left:1887px;top:807px;font-size:13.5px;font-weight:400">空平</div>
<div class="rp" style="left:1697.5px;top:829px;font-size:11.5px;color:#e0e0e0">:49</div>
<div class="rp num g" style="left:1722px;width:60px;top:829px">3463</div>
<div class="rp num r" style="left:1770px;width:60px;top:829px">428</div>
<div class="rp num y" style="left:1818px;width:60px;top:829px">-188</div>
<div class="rp lab r" style="left:1887px;top:829px;font-size:13.5px;font-weight:400">空平</div>
<div class="rp" style="left:1697.5px;top:851px;font-size:11.5px;color:#e0e0e0">:50</div>
<div class="rp num g" style="left:1722px;width:60px;top:851px">3463</div>
<div class="rp num g" style="left:1770px;width:60px;top:851px">394</div>
<div class="rp num y" style="left:1818px;width:60px;top:851px">-151</div>
<div class="rp lab g" style="left:1887px;top:851px;font-size:13.5px;font-weight:400">多平</div>
<div class="rp" style="left:1697.5px;top:873px;font-size:11.5px;color:#e0e0e0">:51</div>
<div class="rp num g" style="left:1722px;width:60px;top:873px">3464</div>
<div class="rp num r" style="left:1770px;width:60px;top:873px">375</div>
<div class="rp num y" style="left:1818px;width:60px;top:873px">-68</div>
<div class="rp lab r" style="left:1887px;top:873px;font-size:13.5px;font-weight:400">空平</div>
<div class="rp" style="left:1697.5px;top:895px;font-size:11.5px;color:#e0e0e0">:52</div>
<div class="rp num g" style="left:1722px;width:60px;top:895px">3463</div>
<div class="rp num g" style="left:1770px;width:60px;top:895px">388</div>
<div class="rp num y" style="left:1818px;width:60px;top:895px">-147</div>
<div class="rp lab g" style="left:1887px;top:895px;font-size:13.5px;font-weight:400">多平</div>
<div class="rp" style="left:1697.5px;top:917px;font-size:11.5px;color:#e0e0e0">:52</div>
<div class="rp num g" style="left:1722px;width:60px;top:917px">3464</div>
<div class="rp num r" style="left:1770px;width:60px;top:917px">401</div>
<div class="rp num y" style="left:1818px;width:60px;top:917px">-51</div>
<div class="rp lab r" style="left:1887px;top:917px;font-size:13.5px;font-weight:400">空平</div>
<div class="rp" style="left:1697.5px;top:939px;font-size:11.5px;color:#e0e0e0">:54</div>
<div class="rp num g" style="left:1722px;width:60px;top:939px">3463</div>
<div class="rp num g" style="left:1770px;width:60px;top:939px">710</div>
<div class="rp num y" style="left:1818px;width:60px;top:939px">-220</div>
<div class="rp lab g" style="left:1887px;top:939px;font-size:13.5px;font-weight:400">多平</div>
<div class="rp" style="left:1697.5px;top:961px;font-size:11.5px;color:#e0e0e0">:55</div>
<div class="rp num g" style="left:1722px;width:60px;top:961px">3462</div>
<div class="rp num g" style="left:1770px;width:60px;top:961px">649</div>
<div class="rp num y" style="left:1818px;width:60px;top:961px">-142</div>
<div class="rp lab g" style="left:1887px;top:961px;font-size:13.5px;font-weight:400">多平</div>
<div class="rp" style="left:1697.5px;top:983px;font-size:11.5px;color:#e0e0e0">:59</div>
<div class="rp num g" style="left:1722px;width:60px;top:983px">3462</div>
<div class="rp num g" style="left:1770px;width:60px;top:983px">379</div>
<div class="rp num y" style="left:1818px;width:60px;top:983px">-113</div>
<div class="rp lab g" style="left:1887px;top:983px;font-size:13.5px;font-weight:400">多平</div>
<div class="rp lab" style="left:1686.5px;top:1014.5px;font-size:12px;color:#fff">笔</div>
<div class="rp lab" style="left:1722.5px;top:1014.5px;font-size:12px;color:#fff">权</div>
<div id="status" class="a">
<span class="a" style="left:6px;top:3px;font-size:13px;font-weight:bold;color:#222;letter-spacing:0.5px">沪</span>
<span class="a" style="left:34px;top:3px;font-size:13px;font-weight:bold;color:#008000;letter-spacing:0.5px">3069.30</span>
<span class="a" style="left:110px;top:3px;font-size:13px;font-weight:bold;color:#008000;letter-spacing:0.5px">-5.66</span>
<span class="a" style="left:152px;top:3px;font-size:13px;font-weight:bold;color:#333;letter-spacing:0.5px">3937.94亿</span>
<span class="a" style="left:236px;top:3px;font-size:13px;font-weight:bold;color:#222;letter-spacing:0.5px">深</span>
<span class="a" style="left:262px;top:3px;font-size:13px;font-weight:bold;color:#008000;letter-spacing:0.5px">9544.76</span>
<span class="a" style="left:331px;top:3px;font-size:13px;font-weight:bold;color:#008000;letter-spacing:0.5px">-42.19</span>
<span class="a" style="left:380px;top:3px;font-size:13px;font-weight:bold;color:#333;letter-spacing:0.5px">5252.35亿</span>
<span class="a" style="left:462px;top:3px;font-size:13px;font-weight:bold;color:#333;letter-spacing:0.5px">399</span>
<span class="a" style="left:488px;top:3px;font-size:13px;font-weight:bold;color:#008000;letter-spacing:0.5px">3567.80</span>
<span class="a" style="left:559px;top:3px;font-size:13px;font-weight:bold;color:#008000;letter-spacing:0.5px">-12.87</span>
<span class="a" style="left:608px;top:3px;font-size:13px;font-weight:bold;color:#333;letter-spacing:0.5px">3142.23亿</span>
<span class="a" style="left:225px;top:5px;width:1px;height:10px;background:#888"></span>
<span class="a" style="left:452px;top:5px;width:1px;height:10px;background:#888"></span>
<span class="a" style="left:680px;top:5px;width:1px;height:10px;background:#888"></span>
<span class="a" style="left:1810px;top:3px;font-size:15px;font-weight:bold;color:#333"><span style="color:#e00000">p</span>obo</span>
<svg class="a" style="left:1852px;top:4px" width="24" height="10"><path d="M1,1 h10 l-4,5 v4 h-2 v-4z" fill="none" stroke="#333" stroke-width="1.2"/><path d="M17,0 v10 M21,4 v6" stroke="#333" stroke-width="1.6"/></svg>
<span class="a" style="left:1883px;top:4px;font-size:13px;color:#333">16:56</span>
</div>
<div class="a" style="left:1915px;top:63px;width:2px;height:981px;background:#d6cece"></div>
<div class="a" style="left:1917px;top:14px;width:2px;height:1030px;background:#fff"></div>
<div class="a" style="left:1628px;top:961px;font-size:19.7px;line-height:24px;color:rgba(255,255,255,0.55)">激活 <span style="font-size:21.8px">Windows</span></div>
<div class="a" style="left:1628px;top:986.5px;font-size:14.8px;line-height:18px;color:rgba(255,255,255,0.55)">转到“设置”以激活 <span style="font-size:16px">Windows</span>。</div>
<div class="a" style="left:783px;top:647px;width:308px;height:335px;background:#f0f0f0;border:1px solid #707070">
<div class="a" style="left:0;top:0;width:306px;height:25px;background:#fff"></div>
<div class="a" style="left:3px;top:6px;font-size:12px;color:#8a8a8a;line-height:14px">螺纹2410 区间统计</div>
<svg class="a" style="left:286px;top:6px" width="14" height="14"><path d="M2,2 L12,12 M12,2 L2,12" stroke="#444" stroke-width="1"/></svg>
<div class="dl" style="top:40px">起始时间</div>
<div class="in" style="top:37px">2022-11-11</div>
<div class="a" style="left:195px;top:38px;width:15px;height:18px;background:#c4dcfa;border-left:1px solid #9ab8e0"></div>
<svg class="a" style="left:195px;top:38px" width="15" height="18"><path d="M4.500,7.500 L7.500,4 L10.500,7.500 M4.500,10.500 L7.500,14 L10.500,10.500" stroke="#33507a" stroke-width="1.8" fill="none"/></svg>
<div class="dl" style="top:64px">结束时间</div>
<div class="in" style="top:61px">2024-04-03</div>
<div class="a" style="left:195px;top:62px;width:15px;height:18px;background:#c4dcfa;border-left:1px solid #9ab8e0"></div>
<svg class="a" style="left:195px;top:62px" width="15" height="18"><path d="M4.500,7.500 L7.500,4 L10.500,7.500 M4.500,10.500 L7.500,14 L10.500,10.500" stroke="#33507a" stroke-width="1.8" fill="none"/></svg>
<div class="dl" style="top:88px">期初价</div>
<div class="in" style="top:85px">3439</div>
<div class="dl" style="top:112px">最高价</div>
<div class="in" style="top:109px">4328</div>
<div class="dl" style="top:136px">最低价</div>
<div class="in" style="top:133px">3388</div>
<div class="dl" style="top:160px">期末价</div>
<div class="in" style="top:157px">3463</div>
<div class="dl" style="top:184px">成交量</div>
<div class="in" style="top:181px">207118671</div>
<div class="dl" style="top:208px">仓差</div>
<div class="in" style="top:205px">1610729</div>
<div class="dl" style="top:233px">加权均价</div>
<div class="in" style="top:230px">3724</div>
<div class="dl" style="top:257px">区间涨幅</div>
<div class="in" style="top:254px">-2.23%</div>
<div class="dl" style="top:281px">区间振幅</div>
<div class="in" style="top:278px">26.54%</div>
<div class="a" style="left:235px;top:184px;font-size:12px;color:#000;line-height:14px">分析周期</div>
<div class="a" style="left:242px;top:208px;font-size:12px;color:#000;line-height:14px">共<span style="font-family:'DejaVu Sans Mono','Liberation Mono',monospace;font-size:10px">71</span>个</div>
<div class="a" style="left:226px;top:301px;width:65px;height:20px;border:1px solid #222;border-radius:4px;background:linear-gradient(#fff,#ececec 50%%,#dcdcdc);box-shadow:inset 0 0 0 1px #fff;color:#000;font-size:12px;line-height:17px;text-align:center;letter-spacing:1px">关闭</div>
</div>
</body></html>
